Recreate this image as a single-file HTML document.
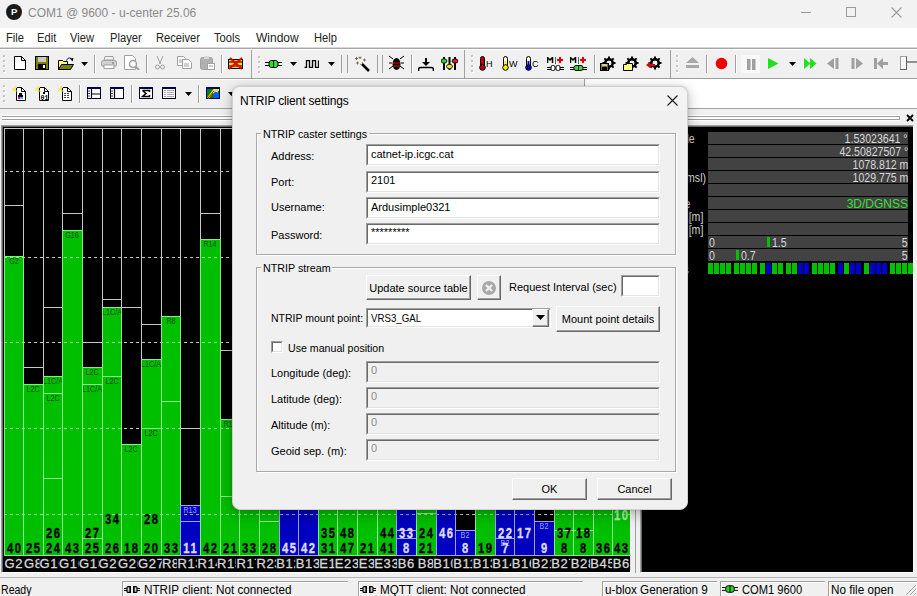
<!DOCTYPE html><html><head><meta charset="utf-8"><style>
*{margin:0;padding:0;box-sizing:border-box}
html,body{width:917px;height:596px;overflow:hidden}
body{position:relative;background:#f0f0f0;font-family:"Liberation Sans",sans-serif;font-size:12px;color:#000}
.a{position:absolute}
.t{position:absolute;white-space:nowrap;line-height:1}
.sep{position:absolute;width:2px;border-left:1px solid #a0a0a0;border-right:1px solid #fff}
.grip{position:absolute;width:3px;background:repeating-linear-gradient(#b4b4b4 0 1px,transparent 1px 4px)}
.sunk{position:absolute;background:#fff;border-top:1px solid #a0a0a0;border-left:1px solid #a0a0a0;border-right:1px solid #fff;border-bottom:1px solid #fff}
.sunk>i{position:absolute;left:0;top:0;right:0;bottom:0;border-top:1px solid #696969;border-left:1px solid #696969;border-right:1px solid #e3e3e3;border-bottom:1px solid #e3e3e3}
.btn{position:absolute;background:#f0f0f0;border-top:1px solid #fff;border-left:1px solid #fff;border-right:1px solid #696969;border-bottom:1px solid #696969}
.btn>i{position:absolute;left:0;top:0;right:0;bottom:0;border-right:1px solid #a0a0a0;border-bottom:1px solid #a0a0a0}
.dl{font-size:11px}
.col{position:absolute;top:129px;height:426px;overflow:hidden}
</style></head><body>
<div class="a" style="left:0;top:0;width:917px;height:28px;background:#f2f2f2"></div>
<div class="a" style="left:6px;top:4px;width:16px;height:16px;border-radius:50%;background:#1a1a1a"></div>
<div class="t" style="left:11px;top:7px;font-size:9.5px;font-weight:bold;color:#fff">P</div>
<div class="t" style="left:28px;top:7px;font-size:12px;color:#8a8a8a">COM1 @ 9600 - u-center 25.06</div>
<div class="a" style="left:801px;top:12px;width:10px;height:1px;background:#9a9a9a"></div>
<div class="a" style="left:846px;top:7px;width:10px;height:10px;border:1px solid #9a9a9a"></div>
<svg class="a" style="left:891px;top:7px" width="11" height="11"><path d="M0.5 0.5L10.5 10.5M10.5 0.5L0.5 10.5" stroke="#9a9a9a" stroke-width="1.1"/></svg>
<div class="a" style="left:0;top:28px;width:917px;height:20px;background:#fff;border-bottom:1px solid #d8d8d8"></div>
<div class="t" style="left:6px;top:32px;font-size:12px;color:#222;transform:scaleX(0.93);transform-origin:left top">File</div>
<div class="t" style="left:37px;top:32px;font-size:12px;color:#222;transform:scaleX(0.93);transform-origin:left top">Edit</div>
<div class="t" style="left:70px;top:32px;font-size:12px;color:#222;transform:scaleX(0.93);transform-origin:left top">View</div>
<div class="t" style="left:110px;top:32px;font-size:12px;color:#222;transform:scaleX(0.93);transform-origin:left top">Player</div>
<div class="t" style="left:156px;top:32px;font-size:12px;color:#222;transform:scaleX(0.93);transform-origin:left top">Receiver</div>
<div class="t" style="left:214px;top:32px;font-size:12px;color:#222;transform:scaleX(0.93);transform-origin:left top">Tools</div>
<div class="t" style="left:256px;top:32px;font-size:12px;color:#222;transform:scaleX(1.0);transform-origin:left top">Window</div>
<div class="t" style="left:314px;top:32px;font-size:12px;color:#222;transform:scaleX(0.93);transform-origin:left top">Help</div>
<div class="a" style="left:0;top:48px;width:917px;height:31px;background:#f0f0f0;border-top:1px solid #a8a8a8;box-shadow:inset 0 1px 0 #fff"></div>
<div class="a" style="left:0;top:78px;width:917px;height:1px;background:#a0a0a0"></div>
<div class="a" style="left:0;top:79px;width:917px;height:30px;background:#fff;border-bottom:1px solid #a0a0a0"></div>
<div class="a" style="left:0;top:79px;width:584px;height:29px;background:#f0f0f0;box-shadow:inset 0 1px 0 #fff"></div>
<div class="a" style="left:584px;top:79px;width:1px;height:29px;background:#a0a0a0"></div>
<div class="a" style="left:3px;top:55px;width:2px;height:2px;background:#c4c4c4;box-shadow:1px 1px 0 #fff"></div><div class="a" style="left:3px;top:60px;width:2px;height:2px;background:#c4c4c4;box-shadow:1px 1px 0 #fff"></div><div class="a" style="left:3px;top:65px;width:2px;height:2px;background:#c4c4c4;box-shadow:1px 1px 0 #fff"></div><div class="a" style="left:3px;top:70px;width:2px;height:2px;background:#c4c4c4;box-shadow:1px 1px 0 #fff"></div><svg class="a" style="left:14px;top:56px" width="12" height="14" viewBox="0 0 12 14"><path d="M0.5 0.5H7.5L11.5 4.5V13.5H0.5Z" fill="#fff" stroke="#000"/><path d="M7.5 0.5V4.5H11.5" fill="none" stroke="#000"/></svg><svg class="a" style="left:35px;top:56px" width="14" height="14" viewBox="0 0 14 14"><rect x="0.5" y="0.5" width="13" height="13" fill="#808000" stroke="#000"/><rect x="3" y="1" width="8" height="5" fill="#c8c8c8"/><rect x="3" y="8" width="8" height="5" fill="#000"/><rect x="8" y="9" width="2" height="3" fill="#fff"/></svg><svg class="a" style="left:58px;top:56px" width="16" height="14" viewBox="0 0 16 14"><path d="M0.5 4.5H4.5L5.5 5.5H9.5V13.5H0.5Z" fill="#ffff80" stroke="#000"/><path d="M3.5 8.5H15.5L12.5 13.5H0.5Z" fill="#808000" stroke="#000"/><path d="M8.5 4.5C9.5 2 12 1 13.5 3" fill="none" stroke="#000"/><path d="M12 2.5L15.5 2L14.5 5.5Z" fill="#000"/></svg><svg class="a" style="left:81px;top:62px" width="7" height="4" viewBox="0 0 7 4"><path d="M0 0H7L3.5 4Z" fill="#000"/></svg><div class="a" style="left:94px;top:55px;width:1px;height:18px;background:#a0a0a0;box-shadow:1px 0 0 #fff"></div><svg class="a" style="left:101px;top:56px" width="16" height="13" viewBox="0 0 16 13"><path d="M4 0.5H12L13 4H3Z" fill="#f0f0f0" stroke="#a0a0a0"/><rect x="0.5" y="4.5" width="15" height="6" rx="2" fill="#d0d0d0" stroke="#a0a0a0"/><rect x="3" y="9" width="10" height="3.5" fill="#fff" stroke="#a0a0a0"/><rect x="11" y="6" width="2" height="2" fill="#a0a0a0"/></svg><svg class="a" style="left:124px;top:55px" width="16" height="15" viewBox="0 0 16 15"><path d="M0.5 0.5H8.5L11.5 3.5V14.5H0.5Z" fill="#fff" stroke="#a0a0a0"/><circle cx="9" cy="9" r="3.5" fill="#fff" stroke="#a0a0a0" stroke-width="1.5"/><path d="M11.5 11.5L15 15" stroke="#a0a0a0" stroke-width="2"/></svg><div class="a" style="left:146px;top:55px;width:1px;height:18px;background:#a0a0a0;box-shadow:1px 0 0 #fff"></div><svg class="a" style="left:155px;top:56px" width="10" height="14" viewBox="0 0 10 14"><path d="M2 0L5.5 8M8 0L4.5 8" stroke="#a0a0a0" stroke-width="1"/><circle cx="2.5" cy="11" r="2" fill="none" stroke="#a0a0a0"/><circle cx="7.5" cy="11" r="2" fill="none" stroke="#a0a0a0"/></svg><svg class="a" style="left:177px;top:56px" width="15" height="13" viewBox="0 0 15 13"><path d="M0.5 0.5H6.5L8.5 2.5V9.5H0.5Z" fill="#fff" stroke="#a0a0a0"/><path d="M5.5 3.5H11.5L14.5 6.5V12.5H5.5Z" fill="#fff" stroke="#a0a0a0"/><path d="M2 4H6M2 6H5M7 8H12M7 10H12" stroke="#a0a0a0"/></svg><svg class="a" style="left:200px;top:56px" width="15" height="14" viewBox="0 0 15 14"><rect x="0.5" y="1.5" width="12" height="12" rx="2" fill="#b0b0b0" stroke="#a0a0a0"/><rect x="4" y="0" width="5" height="3" fill="#d8d8d8"/><rect x="7.5" y="7.5" width="7" height="6" fill="#fff" stroke="#a0a0a0"/><path d="M9 10H13" stroke="#a0a0a0"/></svg><div class="a" style="left:221px;top:55px;width:1px;height:18px;background:#a0a0a0;box-shadow:1px 0 0 #fff"></div><svg class="a" style="left:228px;top:57px" width="15" height="13" viewBox="0 0 15 13"><rect x="0.5" y="2.5" width="14" height="9" fill="#ffd800" stroke="#000"/><path d="M1 5H14M1 9H14" stroke="#6a3000" stroke-width="1.5"/><path d="M1 12L14 1M2 1L14 12" stroke="#e00000" stroke-width="2"/></svg><div class="a" style="left:251px;top:50px;width:1px;height:28px;background:#a0a0a0"></div><div class="a" style="left:258px;top:56px;width:2px;height:2px;background:#c4c4c4;box-shadow:1px 1px 0 #fff"></div><div class="a" style="left:258px;top:61px;width:2px;height:2px;background:#c4c4c4;box-shadow:1px 1px 0 #fff"></div><div class="a" style="left:258px;top:66px;width:2px;height:2px;background:#c4c4c4;box-shadow:1px 1px 0 #fff"></div><div class="a" style="left:258px;top:71px;width:2px;height:2px;background:#c4c4c4;box-shadow:1px 1px 0 #fff"></div><svg class="a" style="left:265px;top:60px" width="17" height="8" viewBox="0 0 17 8"><path d="M0 2.5H4M0 5.5H4M13 2.5H17M13 5.5H17" stroke="#000" stroke-width="1.2"/><rect x="4" y="0.5" width="9" height="7" rx="2.5" fill="#30e030" stroke="#000"/><path d="M8.5 0.5V7.5" stroke="#000"/></svg><svg class="a" style="left:290px;top:62px" width="7" height="4" viewBox="0 0 7 4"><path d="M0 0H7L3.5 4Z" fill="#000"/></svg><svg class="a" style="left:304px;top:60px" width="15" height="8" viewBox="0 0 15 8"><path d="M0.5 7.5H2.5V0.5H5.5V7.5H8.5V0.5H11.5V7.5H14.5V0.5" fill="none" stroke="#000" stroke-width="1.3"/></svg><svg class="a" style="left:328px;top:62px" width="7" height="4" viewBox="0 0 7 4"><path d="M0 0H7L3.5 4Z" fill="#000"/></svg><div class="a" style="left:341px;top:55px;width:1px;height:18px;background:#a0a0a0"></div><div class="a" style="left:347px;top:55px;width:1px;height:18px;background:#a0a0a0"></div><svg class="a" style="left:354px;top:56px" width="17" height="16" viewBox="0 0 17 16"><path d="M7 7L15 15" stroke="#000" stroke-width="2.5"/><path d="M6 6L8 8" stroke="#fff" stroke-width="2"/><path d="M1 2.5H4M2.5 1V4M6 0.5V3M4.5 1.75H7.5M9 4H12M10.5 2.5V5.5M2 7H5M3.5 5.5V8.5" stroke="#807040" stroke-width="1"/></svg><div class="a" style="left:377px;top:55px;width:1px;height:18px;background:#a0a0a0"></div><div class="a" style="left:382px;top:55px;width:1px;height:18px;background:#a0a0a0"></div><svg class="a" style="left:389px;top:55px" width="15" height="16" viewBox="0 0 15 16"><ellipse cx="7.5" cy="9" rx="4" ry="6" fill="#000"/><path d="M4 8H11M4 11H11" stroke="#a00000" stroke-width="1.5"/><path d="M0 1L4 4M15 1L11 4M0 8H3M15 8H12M0 14L4 11M15 14L11 11" stroke="#000" stroke-width="1"/></svg><div class="a" style="left:411px;top:55px;width:1px;height:18px;background:#a0a0a0;box-shadow:1px 0 0 #fff"></div><svg class="a" style="left:418px;top:58px" width="16" height="14" viewBox="0 0 16 14"><path d="M8 0V6" stroke="#000" stroke-width="2"/><path d="M4 4H12L8 8Z" fill="#000"/><path d="M0.5 13V11.5Q0.5 9.5 3 9.5H13Q15.5 9.5 15.5 11.5V13" fill="none" stroke="#000" stroke-width="1.6"/></svg><svg class="a" style="left:441px;top:56px" width="17" height="14" viewBox="0 0 17 14"><path d="M3 1V14M8.5 1V14M14 1V14" stroke="#000" stroke-width="2"/><ellipse cx="3" cy="5" rx="3" ry="2.2" fill="#30d030" stroke="#000" stroke-width="0.8"/><ellipse cx="8.5" cy="10.5" rx="3" ry="2.2" fill="#f0e020" stroke="#000" stroke-width="0.8"/><ellipse cx="14" cy="5" rx="3" ry="2.2" fill="#d02020" stroke="#000" stroke-width="0.8"/></svg><div class="a" style="left:464px;top:50px;width:1px;height:28px;background:#a0a0a0"></div><div class="a" style="left:471px;top:55px;width:2px;height:2px;background:#c4c4c4;box-shadow:1px 1px 0 #fff"></div><div class="a" style="left:471px;top:60px;width:2px;height:2px;background:#c4c4c4;box-shadow:1px 1px 0 #fff"></div><div class="a" style="left:471px;top:65px;width:2px;height:2px;background:#c4c4c4;box-shadow:1px 1px 0 #fff"></div><div class="a" style="left:471px;top:70px;width:2px;height:2px;background:#c4c4c4;box-shadow:1px 1px 0 #fff"></div><svg class="a" style="left:479px;top:56px" width="16" height="15" viewBox="0 0 16 15"><rect x="1.5" y="0.5" width="4" height="11" rx="2" fill="#c00000" stroke="#000"/><circle cx="3.5" cy="11.5" r="2.8" fill="#c00000" stroke="#000"/><text x="7" y="11" font-family="Liberation Sans" font-size="9" fill="#000">H</text></svg><svg class="a" style="left:502px;top:56px" width="16" height="15" viewBox="0 0 16 15"><rect x="1.5" y="0.5" width="4" height="11" rx="2" fill="#fff" stroke="#000"/><rect x="2.5" y="5" width="2" height="6" fill="#f0f000"/><circle cx="3.5" cy="11.5" r="2.8" fill="#f0f000" stroke="#000"/><text x="7" y="11" font-family="Liberation Sans" font-size="9" fill="#000">W</text></svg><svg class="a" style="left:525px;top:56px" width="16" height="15" viewBox="0 0 16 15"><rect x="1.5" y="0.5" width="4" height="11" rx="2" fill="#fff" stroke="#000"/><rect x="2.5" y="5" width="2" height="6" fill="#0000c0"/><circle cx="3.5" cy="11.5" r="2.8" fill="#0000c0" stroke="#000"/><text x="7" y="11" font-family="Liberation Sans" font-size="9" fill="#000">C</text></svg><svg class="a" style="left:547px;top:57px" width="17" height="14" viewBox="0 0 17 14"><path d="M0.5 6V0.5L3 3L5.5 0.5V6" fill="none" stroke="#000" stroke-width="1.5"/><path d="M8.5 0V7" stroke="#000" stroke-width="0.6"/><path d="M13 0V6M10 3H16" stroke="#e00000" stroke-width="2"/><path d="M0 10.5H4M0 12.5H4M13 10.5H17M13 12.5H17" stroke="#000" stroke-width="1"/><rect x="4" y="8.5" width="4" height="5" rx="1.5" fill="#fff" stroke="#000"/><rect x="9" y="8.5" width="4" height="5" rx="1.5" fill="#fff" stroke="#000"/></svg><svg class="a" style="left:570px;top:57px" width="17" height="14" viewBox="0 0 17 14"><path d="M0.5 6V0.5L3 3L5.5 0.5V6" fill="none" stroke="#000" stroke-width="1.5"/><path d="M8.5 0V7" stroke="#000" stroke-width="0.6"/><path d="M13 0V6M10 3H16" stroke="#e00000" stroke-width="2"/><path d="M0 10.5H4M0 12.5H4M13 10.5H17M13 12.5H17" stroke="#000" stroke-width="1"/><rect x="4" y="8.5" width="9" height="5" rx="2" fill="#30e030" stroke="#000"/><path d="M8.5 8.5V13.5" stroke="#000"/></svg><div class="a" style="left:594px;top:55px;width:1px;height:18px;background:#a0a0a0;box-shadow:1px 0 0 #fff"></div><svg class="a" style="left:600px;top:56px" width="17" height="15" viewBox="0 0 17 15"><circle cx="9" cy="7" r="5" fill="#000"/><rect x="8" y="0.5" width="2" height="13" fill="#000" transform="rotate(0 9 7)"/><rect x="8" y="0.5" width="2" height="13" fill="#000" transform="rotate(45 9 7)"/><rect x="8" y="0.5" width="2" height="13" fill="#000" transform="rotate(90 9 7)"/><rect x="8" y="0.5" width="2" height="13" fill="#000" transform="rotate(135 9 7)"/><circle cx="9" cy="7" r="3" fill="#f0f0f0" stroke="#000"/><rect x="0.5" y="7.5" width="8" height="7" fill="#808000" stroke="#000"/><rect x="2" y="8" width="5" height="2" fill="#c8c8c8"/><rect x="2" y="11" width="5" height="3" fill="#000"/></svg><svg class="a" style="left:623px;top:56px" width="17" height="15" viewBox="0 0 17 15"><circle cx="9" cy="7" r="5" fill="#000"/><rect x="8" y="0.5" width="2" height="13" fill="#000" transform="rotate(0 9 7)"/><rect x="8" y="0.5" width="2" height="13" fill="#000" transform="rotate(45 9 7)"/><rect x="8" y="0.5" width="2" height="13" fill="#000" transform="rotate(90 9 7)"/><rect x="8" y="0.5" width="2" height="13" fill="#000" transform="rotate(135 9 7)"/><circle cx="9" cy="7" r="3" fill="#f0f0f0" stroke="#000"/><path d="M0.5 8.5H3.5L4.5 7.5H9.5V14.5H0.5Z" fill="#ffff80" stroke="#000"/></svg><svg class="a" style="left:646px;top:56px" width="17" height="15" viewBox="0 0 17 15"><circle cx="9" cy="7" r="5" fill="#000"/><rect x="8" y="0.5" width="2" height="13" fill="#000" transform="rotate(0 9 7)"/><rect x="8" y="0.5" width="2" height="13" fill="#000" transform="rotate(45 9 7)"/><rect x="8" y="0.5" width="2" height="13" fill="#000" transform="rotate(90 9 7)"/><rect x="8" y="0.5" width="2" height="13" fill="#000" transform="rotate(135 9 7)"/><circle cx="9" cy="7" r="3" fill="#f0f0f0" stroke="#000"/><path d="M0 9L4 6V8H9V10H4V12Z" fill="#e00000"/></svg><div class="a" style="left:670px;top:50px;width:1px;height:28px;background:#a0a0a0"></div><div class="a" style="left:676px;top:55px;width:2px;height:2px;background:#c4c4c4;box-shadow:1px 1px 0 #fff"></div><div class="a" style="left:676px;top:60px;width:2px;height:2px;background:#c4c4c4;box-shadow:1px 1px 0 #fff"></div><div class="a" style="left:676px;top:65px;width:2px;height:2px;background:#c4c4c4;box-shadow:1px 1px 0 #fff"></div><div class="a" style="left:676px;top:70px;width:2px;height:2px;background:#c4c4c4;box-shadow:1px 1px 0 #fff"></div><svg class="a" style="left:686px;top:57px" width="13" height="12" viewBox="0 0 13 12"><path d="M6.5 0L13 6H0Z" fill="#a8a8a8"/><rect x="0" y="8" width="13" height="3" fill="#a8a8a8"/></svg><div class="a" style="left:706px;top:55px;width:1px;height:18px;background:#a0a0a0;box-shadow:1px 0 0 #fff"></div><svg class="a" style="left:715px;top:57px" width="13" height="13" viewBox="0 0 13 13"><circle cx="6.5" cy="6.5" r="5.8" fill="#f00000"/></svg><div class="a" style="left:735px;top:55px;width:1px;height:18px;background:#a0a0a0;box-shadow:1px 0 0 #fff"></div><div class="a" style="left:741px;top:55px;width:19px;height:18px;background:#f8f8f8"></div><svg class="a" style="left:746px;top:59px" width="10" height="11" viewBox="0 0 10 11"><rect x="1" y="0" width="3.5" height="11" fill="#a0a0a0"/><rect x="6" y="0" width="3.5" height="11" fill="#a0a0a0"/></svg><svg class="a" style="left:768px;top:58px" width="11" height="11" viewBox="0 0 11 11"><path d="M0 0L10.5 5.5L0 11Z" fill="#20e020"/></svg><svg class="a" style="left:789px;top:62px" width="7" height="4" viewBox="0 0 7 4"><path d="M0 0H7L3.5 4Z" fill="#000"/></svg><svg class="a" style="left:804px;top:58px" width="13" height="11" viewBox="0 0 13 11"><path d="M0 0L6.5 5.5L0 11Z" fill="#20e020"/><path d="M6 0L12.5 5.5L6 11Z" fill="#20e020"/></svg><svg class="a" style="left:827px;top:58px" width="12" height="11" viewBox="0 0 12 11"><path d="M7 0V11L0 5.5Z" fill="#a0a0a0"/><rect x="8.5" y="0" width="3" height="11" fill="#a0a0a0"/></svg><svg class="a" style="left:851px;top:58px" width="12" height="11" viewBox="0 0 12 11"><rect x="0.5" y="0" width="3" height="11" fill="#a0a0a0"/><path d="M5 0V11L12 5.5Z" fill="#a0a0a0"/></svg><svg class="a" style="left:874px;top:58px" width="14" height="11" viewBox="0 0 14 11"><rect x="0" y="0" width="3" height="11" fill="#a0a0a0"/><path d="M3 5.5L9 0V11Z" fill="#a0a0a0"/><rect x="8" y="4" width="6" height="3" fill="#a0a0a0"/></svg><svg class="a" style="left:899px;top:56px" width="18" height="15" viewBox="0 0 18 15"><rect x="1.5" y="0.5" width="6" height="13" fill="#f8f8f8" stroke="#a0a0a0"/><path d="M7.5 0.5V13.5H1" stroke="#606060" fill="none"/><rect x="8" y="5" width="10" height="2" fill="#909090"/></svg><div class="a" style="left:3px;top:85px;width:2px;height:2px;background:#c4c4c4;box-shadow:1px 1px 0 #fff"></div><div class="a" style="left:3px;top:90px;width:2px;height:2px;background:#c4c4c4;box-shadow:1px 1px 0 #fff"></div><div class="a" style="left:3px;top:95px;width:2px;height:2px;background:#c4c4c4;box-shadow:1px 1px 0 #fff"></div><div class="a" style="left:3px;top:100px;width:2px;height:2px;background:#c4c4c4;box-shadow:1px 1px 0 #fff"></div><svg class="a" style="left:12px;top:86px" width="16" height="15" viewBox="0 0 16 15"><path d="M4.5 1.5H9.5L13.5 5.5V14.5H4.5Z" fill="#fff" stroke="#000"/><path d="M9.5 1.5V5.5H13.5" fill="none" stroke="#000"/><path d="M0 2L6 6M3 0V6M0 5L5 1" stroke="#e8e840" stroke-width="1"/><rect x="7" y="7" width="3" height="2" fill="#000"/><rect x="6" y="9" width="5" height="2" fill="#000"/><rect x="6" y="11" width="2.5" height="2" fill="#e000e0"/><rect x="8.5" y="11" width="2.5" height="2" fill="#30c0f0"/></svg><svg class="a" style="left:35px;top:86px" width="16" height="15" viewBox="0 0 16 15"><path d="M4.5 1.5H9.5L13.5 5.5V14.5H4.5Z" fill="#fff" stroke="#000"/><path d="M9.5 1.5V5.5H13.5" fill="none" stroke="#000"/><path d="M0 2L6 6M3 0V6M0 5L5 1" stroke="#e8e840" stroke-width="1"/><text x="5.5" y="13.5" font-family="Liberation Mono" font-weight="bold" font-size="6.5" fill="#000">01</text><rect x="8" y="6" width="2" height="2" fill="#000"/></svg><svg class="a" style="left:58px;top:86px" width="16" height="15" viewBox="0 0 16 15"><path d="M4.5 1.5H9.5L13.5 5.5V14.5H4.5Z" fill="#fff" stroke="#000"/><path d="M9.5 1.5V5.5H13.5" fill="none" stroke="#000"/><path d="M0 2L6 6M3 0V6M0 5L5 1" stroke="#e8e840" stroke-width="1"/><path d="M6 7.5H12M6 9.5H12M6 11.5H12" stroke="#404040" stroke-dasharray="2 1"/></svg><div class="a" style="left:79px;top:85px;width:1px;height:18px;background:#a0a0a0;box-shadow:1px 0 0 #fff"></div><svg class="a" style="left:87px;top:87px" width="14" height="12" viewBox="0 0 14 12"><rect x="0.5" y="0.5" width="13" height="11" fill="#fff" stroke="#000020"/><rect x="0" y="0" width="14" height="2" fill="#000050"/><path d="M4.5 2V11.5M4.5 7H14" stroke="#000020" stroke-width="1.2"/><path d="M2 3.5V4.5M2 6V7M2 8.5V9.5" stroke="#000" stroke-width="1.5"/></svg><svg class="a" style="left:110px;top:87px" width="14" height="12" viewBox="0 0 14 12"><rect x="0.5" y="0.5" width="13" height="11" fill="#fff" stroke="#000020"/><rect x="0" y="0" width="14" height="2" fill="#000050"/><path d="M4.5 2V11.5" stroke="#000020" stroke-width="1.2"/><path d="M2 3.5V4.5M2 6V7M2 8.5V9.5" stroke="#000" stroke-width="1.5"/></svg><div class="a" style="left:131px;top:85px;width:1px;height:18px;background:#a0a0a0;box-shadow:1px 0 0 #fff"></div><svg class="a" style="left:139px;top:87px" width="14" height="12" viewBox="0 0 14 12"><rect x="0.5" y="0.5" width="13" height="11" fill="#fff" stroke="#000020"/><rect x="0" y="0" width="14" height="2" fill="#000050"/><path d="M3.5 3.5H10.5V5M3.5 3.5L7 6.5L3.5 9.5H10.5V8" fill="none" stroke="#000" stroke-width="1.5"/></svg><svg class="a" style="left:162px;top:87px" width="14" height="12" viewBox="0 0 14 12"><rect x="0.5" y="0.5" width="13" height="11" fill="#fff" stroke="#000020"/><rect x="0" y="0" width="14" height="2" fill="#000050"/><path d="M2 3.5H12M2 5.5H12M2 7.5H12M2 9.5H12" stroke="#a8a8a8" stroke-dasharray="2 1 7 0"/></svg><svg class="a" style="left:185px;top:92px" width="7" height="4" viewBox="0 0 7 4"><path d="M0 0H7L3.5 4Z" fill="#000"/></svg><div class="a" style="left:198px;top:85px;width:1px;height:18px;background:#a0a0a0;box-shadow:1px 0 0 #fff"></div><svg class="a" style="left:206px;top:87px" width="14" height="12" viewBox="0 0 14 12"><rect x="0.5" y="0.5" width="13" height="11" fill="#008000" stroke="#000080"/><rect x="0" y="0" width="14" height="2" fill="#000080"/><path d="M2 11L8 3L13 3" stroke="#f0f000" stroke-width="2" fill="none"/><path d="M2 11L8 4" stroke="#e00000" stroke-width="1"/><circle cx="10" cy="8" r="3" fill="#0060ff"/><path d="M7 6Q9 3 12 5" stroke="#fff" fill="none"/></svg><svg class="a" style="left:228px;top:92px" width="7" height="4" viewBox="0 0 7 4"><path d="M0 0H7L3.5 4Z" fill="#000"/></svg>
<div class="a" style="left:2px;top:115px;width:898px;height:6px;background:#fff"></div>
<div class="a" style="left:2px;top:116px;width:898px;height:1px;background:#a0a0a0"></div>
<div class="a" style="left:2px;top:119px;width:898px;height:1px;background:#a0a0a0"></div>
<div class="a" style="left:899px;top:116px;width:1px;height:4px;background:#a0a0a0"></div>
<svg class="a" style="left:906px;top:114px" width="8" height="8"><path d="M1 1L7 7M7 1L1 7" stroke="#000" stroke-width="1.8"/></svg>
<div class="a" style="left:1px;top:125px;width:630px;height:448px;background:#000;border-top:1px solid #a0a0a0;border-left:1px solid #a0a0a0;border-right:1px solid #fff;border-bottom:1px solid #fff;box-shadow:inset 1px 1px 0 #696969"></div>
<div class="a" style="left:640px;top:125px;width:274px;height:448px;background:#000;border-top:1px solid #a0a0a0;border-left:1px solid #a0a0a0;border-right:1px solid #fff;border-bottom:1px solid #fff;box-shadow:inset 1px 1px 0 #696969"></div>
<div class="a" style="left:635px;top:125px;width:1px;height:448px;background:#a0a0a0"></div>
<div class="a" style="left:4px;top:256px;width:19px;height:299px;background:#00be00"></div>
<div class="a" style="left:23px;top:384px;width:20px;height:171px;background:#00be00"></div>
<div class="a" style="left:43px;top:376px;width:19px;height:179px;background:#00be00"></div>
<div class="a" style="left:62px;top:230px;width:20px;height:325px;background:#00be00"></div>
<div class="a" style="left:82px;top:367px;width:20px;height:188px;background:#00be00"></div>
<div class="a" style="left:102px;top:307px;width:19px;height:248px;background:#00be00"></div>
<div class="a" style="left:121px;top:444px;width:20px;height:111px;background:#00be00"></div>
<div class="a" style="left:141px;top:359px;width:20px;height:196px;background:#00be00"></div>
<div class="a" style="left:161px;top:316px;width:19px;height:239px;background:#00be00"></div>
<div class="a" style="left:180px;top:505px;width:20px;height:50px;background:#0000c0"></div>
<div class="a" style="left:200px;top:239px;width:20px;height:316px;background:#00be00"></div>
<div class="a" style="left:220px;top:419px;width:19px;height:136px;background:#00be00"></div>
<div class="a" style="left:239px;top:300px;width:20px;height:255px;background:#00be00"></div>
<div class="a" style="left:259px;top:300px;width:20px;height:255px;background:#00be00"></div>
<div class="a" style="left:279px;top:300px;width:19px;height:255px;background:#0000c0"></div>
<div class="a" style="left:298px;top:300px;width:20px;height:255px;background:#0000c0"></div>
<div class="a" style="left:318px;top:300px;width:19px;height:255px;background:#00be00"></div>
<div class="a" style="left:337px;top:300px;width:20px;height:255px;background:#00be00"></div>
<div class="a" style="left:357px;top:300px;width:20px;height:255px;background:#00be00"></div>
<div class="a" style="left:377px;top:300px;width:19px;height:255px;background:#00be00"></div>
<div class="a" style="left:396px;top:300px;width:20px;height:255px;background:#0000c0"></div>
<div class="a" style="left:416px;top:300px;width:20px;height:255px;background:#00be00"></div>
<div class="a" style="left:436px;top:300px;width:19px;height:255px;background:#0000c0"></div>
<div class="a" style="left:455px;top:530px;width:20px;height:25px;background:#0000c0"></div>
<div class="a" style="left:475px;top:300px;width:20px;height:255px;background:#00be00"></div>
<div class="a" style="left:495px;top:300px;width:19px;height:255px;background:#0000c0"></div>
<div class="a" style="left:514px;top:300px;width:20px;height:255px;background:#0000c0"></div>
<div class="a" style="left:534px;top:521px;width:20px;height:34px;background:#0000c0"></div>
<div class="a" style="left:554px;top:300px;width:19px;height:255px;background:#00be00"></div>
<div class="a" style="left:573px;top:300px;width:20px;height:255px;background:#00be00"></div>
<div class="a" style="left:593px;top:300px;width:19px;height:255px;background:#00be00"></div>
<div class="a" style="left:612px;top:300px;width:18px;height:255px;background:#00be00"></div>
<div class="a" style="left:4px;top:129px;width:1px;height:426px;background:#c8c8c8"></div>
<div class="a" style="left:23px;top:129px;width:1px;height:426px;background:#c8c8c8"></div>
<div class="a" style="left:43px;top:129px;width:1px;height:426px;background:#c8c8c8"></div>
<div class="a" style="left:62px;top:129px;width:1px;height:426px;background:#c8c8c8"></div>
<div class="a" style="left:82px;top:129px;width:1px;height:426px;background:#c8c8c8"></div>
<div class="a" style="left:102px;top:129px;width:1px;height:426px;background:#c8c8c8"></div>
<div class="a" style="left:121px;top:129px;width:1px;height:426px;background:#c8c8c8"></div>
<div class="a" style="left:141px;top:129px;width:1px;height:426px;background:#c8c8c8"></div>
<div class="a" style="left:161px;top:129px;width:1px;height:426px;background:#c8c8c8"></div>
<div class="a" style="left:180px;top:129px;width:1px;height:426px;background:#c8c8c8"></div>
<div class="a" style="left:200px;top:129px;width:1px;height:426px;background:#c8c8c8"></div>
<div class="a" style="left:220px;top:129px;width:1px;height:426px;background:#c8c8c8"></div>
<div class="a" style="left:239px;top:129px;width:1px;height:426px;background:#c8c8c8"></div>
<div class="a" style="left:259px;top:129px;width:1px;height:426px;background:#c8c8c8"></div>
<div class="a" style="left:279px;top:129px;width:1px;height:426px;background:#c8c8c8"></div>
<div class="a" style="left:298px;top:129px;width:1px;height:426px;background:#c8c8c8"></div>
<div class="a" style="left:318px;top:129px;width:1px;height:426px;background:#c8c8c8"></div>
<div class="a" style="left:337px;top:129px;width:1px;height:426px;background:#c8c8c8"></div>
<div class="a" style="left:357px;top:129px;width:1px;height:426px;background:#c8c8c8"></div>
<div class="a" style="left:377px;top:129px;width:1px;height:426px;background:#c8c8c8"></div>
<div class="a" style="left:396px;top:129px;width:1px;height:426px;background:#c8c8c8"></div>
<div class="a" style="left:416px;top:129px;width:1px;height:426px;background:#c8c8c8"></div>
<div class="a" style="left:436px;top:129px;width:1px;height:426px;background:#c8c8c8"></div>
<div class="a" style="left:455px;top:129px;width:1px;height:426px;background:#c8c8c8"></div>
<div class="a" style="left:475px;top:129px;width:1px;height:426px;background:#c8c8c8"></div>
<div class="a" style="left:495px;top:129px;width:1px;height:426px;background:#c8c8c8"></div>
<div class="a" style="left:514px;top:129px;width:1px;height:426px;background:#c8c8c8"></div>
<div class="a" style="left:534px;top:129px;width:1px;height:426px;background:#c8c8c8"></div>
<div class="a" style="left:554px;top:129px;width:1px;height:426px;background:#c8c8c8"></div>
<div class="a" style="left:573px;top:129px;width:1px;height:426px;background:#c8c8c8"></div>
<div class="a" style="left:593px;top:129px;width:1px;height:426px;background:#c8c8c8"></div>
<div class="a" style="left:612px;top:129px;width:1px;height:426px;background:#c8c8c8"></div>
<div class="a" style="left:4px;top:128px;width:626px;height:1px;background:#c8c8c8"></div>
<div class="a" style="left:4px;top:555px;width:626px;height:1px;background:#c8c8c8"></div>
<div class="a" style="left:4px;top:171px;width:626px;height:1px;background:repeating-linear-gradient(90deg,#c8c8c8 0 3px,transparent 3px 6px)"></div>
<div class="a" style="left:4px;top:257px;width:626px;height:1px;background:repeating-linear-gradient(90deg,#c8c8c8 0 3px,transparent 3px 6px)"></div>
<div class="a" style="left:4px;top:342px;width:626px;height:1px;background:repeating-linear-gradient(90deg,#c8c8c8 0 3px,transparent 3px 6px)"></div>
<div class="a" style="left:4px;top:428px;width:626px;height:1px;background:repeating-linear-gradient(90deg,#c8c8c8 0 3px,transparent 3px 6px)"></div>
<div class="a" style="left:4px;top:514px;width:626px;height:1px;background:repeating-linear-gradient(90deg,#c8c8c8 0 3px,transparent 3px 6px)"></div>
<div class="a" style="left:4px;top:205px;width:20px;height:1px;background:#c8c8c8"></div>
<div class="a" style="left:4px;top:256px;width:20px;height:1px;background:#8ae88a"></div>
<div class="a" style="left:4px;top:256px;width:1px;height:300px;background:#8ae88a"></div>
<div class="a" style="left:23px;top:256px;width:1px;height:300px;background:#8ae88a"></div>
<div class="a" style="left:4px;top:555px;width:20px;height:1px;background:#8ae88a"></div>
<div class="a" style="left:5px;top:257px;width:18px;height:1px;background:repeating-linear-gradient(90deg,#8ae88a -1px 2px,transparent 2px 5px)"></div>
<div class="a" style="left:5px;top:342px;width:18px;height:1px;background:repeating-linear-gradient(90deg,#8ae88a -1px 2px,transparent 2px 5px)"></div>
<div class="a" style="left:5px;top:428px;width:18px;height:1px;background:repeating-linear-gradient(90deg,#8ae88a -1px 2px,transparent 2px 5px)"></div>
<div class="a" style="left:5px;top:514px;width:18px;height:1px;background:repeating-linear-gradient(90deg,#8ae88a -1px 2px,transparent 2px 5px)"></div>
<div class="a" style="left:23px;top:367px;width:21px;height:1px;background:#c8c8c8"></div>
<div class="a" style="left:23px;top:384px;width:21px;height:1px;background:#8ae88a"></div>
<div class="a" style="left:23px;top:384px;width:1px;height:172px;background:#8ae88a"></div>
<div class="a" style="left:43px;top:384px;width:1px;height:172px;background:#8ae88a"></div>
<div class="a" style="left:23px;top:555px;width:21px;height:1px;background:#8ae88a"></div>
<div class="a" style="left:24px;top:428px;width:19px;height:1px;background:repeating-linear-gradient(90deg,#8ae88a -2px 1px,transparent 1px 4px)"></div>
<div class="a" style="left:24px;top:514px;width:19px;height:1px;background:repeating-linear-gradient(90deg,#8ae88a -2px 1px,transparent 1px 4px)"></div>
<div class="a" style="left:43px;top:307px;width:20px;height:1px;background:#c8c8c8"></div>
<div class="a" style="left:43px;top:393px;width:20px;height:1px;background:#8ae88a"></div>
<div class="a" style="left:43px;top:478px;width:20px;height:1px;background:#8ae88a"></div>
<div class="a" style="left:43px;top:376px;width:20px;height:1px;background:#8ae88a"></div>
<div class="a" style="left:43px;top:376px;width:1px;height:180px;background:#8ae88a"></div>
<div class="a" style="left:62px;top:376px;width:1px;height:180px;background:#8ae88a"></div>
<div class="a" style="left:43px;top:555px;width:20px;height:1px;background:#8ae88a"></div>
<div class="a" style="left:44px;top:428px;width:18px;height:1px;background:repeating-linear-gradient(90deg,#8ae88a -4px -1px,transparent -1px 2px)"></div>
<div class="a" style="left:44px;top:514px;width:18px;height:1px;background:repeating-linear-gradient(90deg,#8ae88a -4px -1px,transparent -1px 2px)"></div>
<div class="a" style="left:62px;top:213px;width:21px;height:1px;background:#c8c8c8"></div>
<div class="a" style="left:62px;top:230px;width:21px;height:1px;background:#8ae88a"></div>
<div class="a" style="left:62px;top:230px;width:1px;height:326px;background:#8ae88a"></div>
<div class="a" style="left:82px;top:230px;width:1px;height:326px;background:#8ae88a"></div>
<div class="a" style="left:62px;top:555px;width:21px;height:1px;background:#8ae88a"></div>
<div class="a" style="left:63px;top:257px;width:19px;height:1px;background:repeating-linear-gradient(90deg,#8ae88a -5px -2px,transparent -2px 1px)"></div>
<div class="a" style="left:63px;top:342px;width:19px;height:1px;background:repeating-linear-gradient(90deg,#8ae88a -5px -2px,transparent -2px 1px)"></div>
<div class="a" style="left:63px;top:428px;width:19px;height:1px;background:repeating-linear-gradient(90deg,#8ae88a -5px -2px,transparent -2px 1px)"></div>
<div class="a" style="left:63px;top:514px;width:19px;height:1px;background:repeating-linear-gradient(90deg,#8ae88a -5px -2px,transparent -2px 1px)"></div>
<div class="a" style="left:82px;top:342px;width:21px;height:1px;background:#c8c8c8"></div>
<div class="a" style="left:82px;top:384px;width:21px;height:1px;background:#8ae88a"></div>
<div class="a" style="left:82px;top:538px;width:21px;height:1px;background:#8ae88a"></div>
<div class="a" style="left:82px;top:367px;width:21px;height:1px;background:#8ae88a"></div>
<div class="a" style="left:82px;top:367px;width:1px;height:189px;background:#8ae88a"></div>
<div class="a" style="left:102px;top:367px;width:1px;height:189px;background:#8ae88a"></div>
<div class="a" style="left:82px;top:555px;width:21px;height:1px;background:#8ae88a"></div>
<div class="a" style="left:83px;top:428px;width:19px;height:1px;background:repeating-linear-gradient(90deg,#8ae88a -1px 2px,transparent 2px 5px)"></div>
<div class="a" style="left:83px;top:514px;width:19px;height:1px;background:repeating-linear-gradient(90deg,#8ae88a -1px 2px,transparent 2px 5px)"></div>
<div class="a" style="left:102px;top:299px;width:20px;height:1px;background:#c8c8c8"></div>
<div class="a" style="left:102px;top:376px;width:20px;height:1px;background:#8ae88a"></div>
<div class="a" style="left:102px;top:307px;width:20px;height:1px;background:#8ae88a"></div>
<div class="a" style="left:102px;top:307px;width:1px;height:249px;background:#8ae88a"></div>
<div class="a" style="left:121px;top:307px;width:1px;height:249px;background:#8ae88a"></div>
<div class="a" style="left:102px;top:555px;width:20px;height:1px;background:#8ae88a"></div>
<div class="a" style="left:103px;top:342px;width:18px;height:1px;background:repeating-linear-gradient(90deg,#8ae88a -3px 0px,transparent 0px 3px)"></div>
<div class="a" style="left:103px;top:428px;width:18px;height:1px;background:repeating-linear-gradient(90deg,#8ae88a -3px 0px,transparent 0px 3px)"></div>
<div class="a" style="left:103px;top:514px;width:18px;height:1px;background:repeating-linear-gradient(90deg,#8ae88a -3px 0px,transparent 0px 3px)"></div>
<div class="a" style="left:121px;top:307px;width:21px;height:1px;background:#c8c8c8"></div>
<div class="a" style="left:121px;top:444px;width:21px;height:1px;background:#8ae88a"></div>
<div class="a" style="left:121px;top:444px;width:1px;height:112px;background:#8ae88a"></div>
<div class="a" style="left:141px;top:444px;width:1px;height:112px;background:#8ae88a"></div>
<div class="a" style="left:121px;top:555px;width:21px;height:1px;background:#8ae88a"></div>
<div class="a" style="left:122px;top:514px;width:19px;height:1px;background:repeating-linear-gradient(90deg,#8ae88a -4px -1px,transparent -1px 2px)"></div>
<div class="a" style="left:141px;top:324px;width:21px;height:1px;background:#c8c8c8"></div>
<div class="a" style="left:141px;top:428px;width:21px;height:1px;background:#8ae88a"></div>
<div class="a" style="left:141px;top:359px;width:21px;height:1px;background:#8ae88a"></div>
<div class="a" style="left:141px;top:359px;width:1px;height:197px;background:#8ae88a"></div>
<div class="a" style="left:161px;top:359px;width:1px;height:197px;background:#8ae88a"></div>
<div class="a" style="left:141px;top:555px;width:21px;height:1px;background:#8ae88a"></div>
<div class="a" style="left:142px;top:428px;width:19px;height:1px;background:repeating-linear-gradient(90deg,#8ae88a 0px 3px,transparent 3px 6px)"></div>
<div class="a" style="left:142px;top:514px;width:19px;height:1px;background:repeating-linear-gradient(90deg,#8ae88a 0px 3px,transparent 3px 6px)"></div>
<div class="a" style="left:161px;top:401px;width:20px;height:1px;background:#8ae88a"></div>
<div class="a" style="left:161px;top:316px;width:20px;height:1px;background:#8ae88a"></div>
<div class="a" style="left:161px;top:316px;width:1px;height:240px;background:#8ae88a"></div>
<div class="a" style="left:180px;top:316px;width:1px;height:240px;background:#8ae88a"></div>
<div class="a" style="left:161px;top:555px;width:20px;height:1px;background:#8ae88a"></div>
<div class="a" style="left:162px;top:342px;width:18px;height:1px;background:repeating-linear-gradient(90deg,#8ae88a -2px 1px,transparent 1px 4px)"></div>
<div class="a" style="left:162px;top:428px;width:18px;height:1px;background:repeating-linear-gradient(90deg,#8ae88a -2px 1px,transparent 1px 4px)"></div>
<div class="a" style="left:162px;top:514px;width:18px;height:1px;background:repeating-linear-gradient(90deg,#8ae88a -2px 1px,transparent 1px 4px)"></div>
<div class="a" style="left:180px;top:428px;width:21px;height:1px;background:#c8c8c8"></div>
<div class="a" style="left:180px;top:521px;width:21px;height:1px;background:#a0a0f4"></div>
<div class="a" style="left:180px;top:505px;width:21px;height:1px;background:#a0a0f4"></div>
<div class="a" style="left:180px;top:505px;width:1px;height:51px;background:#a0a0f4"></div>
<div class="a" style="left:200px;top:505px;width:1px;height:51px;background:#a0a0f4"></div>
<div class="a" style="left:180px;top:555px;width:21px;height:1px;background:#a0a0f4"></div>
<div class="a" style="left:181px;top:514px;width:19px;height:1px;background:repeating-linear-gradient(90deg,#a0a0f4 -3px 0px,transparent 0px 3px)"></div>
<div class="a" style="left:200px;top:213px;width:21px;height:1px;background:#c8c8c8"></div>
<div class="a" style="left:200px;top:239px;width:21px;height:1px;background:#8ae88a"></div>
<div class="a" style="left:200px;top:239px;width:1px;height:317px;background:#8ae88a"></div>
<div class="a" style="left:220px;top:239px;width:1px;height:317px;background:#8ae88a"></div>
<div class="a" style="left:200px;top:555px;width:21px;height:1px;background:#8ae88a"></div>
<div class="a" style="left:201px;top:257px;width:19px;height:1px;background:repeating-linear-gradient(90deg,#8ae88a -5px -2px,transparent -2px 1px)"></div>
<div class="a" style="left:201px;top:342px;width:19px;height:1px;background:repeating-linear-gradient(90deg,#8ae88a -5px -2px,transparent -2px 1px)"></div>
<div class="a" style="left:201px;top:428px;width:19px;height:1px;background:repeating-linear-gradient(90deg,#8ae88a -5px -2px,transparent -2px 1px)"></div>
<div class="a" style="left:201px;top:514px;width:19px;height:1px;background:repeating-linear-gradient(90deg,#8ae88a -5px -2px,transparent -2px 1px)"></div>
<div class="a" style="left:220px;top:350px;width:20px;height:1px;background:#c8c8c8"></div>
<div class="a" style="left:220px;top:496px;width:20px;height:1px;background:#8ae88a"></div>
<div class="a" style="left:220px;top:419px;width:20px;height:1px;background:#8ae88a"></div>
<div class="a" style="left:220px;top:419px;width:1px;height:137px;background:#8ae88a"></div>
<div class="a" style="left:239px;top:419px;width:1px;height:137px;background:#8ae88a"></div>
<div class="a" style="left:220px;top:555px;width:20px;height:1px;background:#8ae88a"></div>
<div class="a" style="left:221px;top:428px;width:18px;height:1px;background:repeating-linear-gradient(90deg,#8ae88a -1px 2px,transparent 2px 5px)"></div>
<div class="a" style="left:221px;top:514px;width:18px;height:1px;background:repeating-linear-gradient(90deg,#8ae88a -1px 2px,transparent 2px 5px)"></div>
<div class="a" style="left:239px;top:300px;width:21px;height:1px;background:#8ae88a"></div>
<div class="a" style="left:239px;top:300px;width:1px;height:256px;background:#8ae88a"></div>
<div class="a" style="left:259px;top:300px;width:1px;height:256px;background:#8ae88a"></div>
<div class="a" style="left:239px;top:555px;width:21px;height:1px;background:#8ae88a"></div>
<div class="a" style="left:240px;top:342px;width:19px;height:1px;background:repeating-linear-gradient(90deg,#8ae88a -2px 1px,transparent 1px 4px)"></div>
<div class="a" style="left:240px;top:428px;width:19px;height:1px;background:repeating-linear-gradient(90deg,#8ae88a -2px 1px,transparent 1px 4px)"></div>
<div class="a" style="left:240px;top:514px;width:19px;height:1px;background:repeating-linear-gradient(90deg,#8ae88a -2px 1px,transparent 1px 4px)"></div>
<div class="a" style="left:259px;top:521px;width:21px;height:1px;background:#8ae88a"></div>
<div class="a" style="left:259px;top:300px;width:21px;height:1px;background:#8ae88a"></div>
<div class="a" style="left:259px;top:300px;width:1px;height:256px;background:#8ae88a"></div>
<div class="a" style="left:279px;top:300px;width:1px;height:256px;background:#8ae88a"></div>
<div class="a" style="left:259px;top:555px;width:21px;height:1px;background:#8ae88a"></div>
<div class="a" style="left:260px;top:342px;width:19px;height:1px;background:repeating-linear-gradient(90deg,#8ae88a -4px -1px,transparent -1px 2px)"></div>
<div class="a" style="left:260px;top:428px;width:19px;height:1px;background:repeating-linear-gradient(90deg,#8ae88a -4px -1px,transparent -1px 2px)"></div>
<div class="a" style="left:260px;top:514px;width:19px;height:1px;background:repeating-linear-gradient(90deg,#8ae88a -4px -1px,transparent -1px 2px)"></div>
<div class="a" style="left:279px;top:300px;width:20px;height:1px;background:#a0a0f4"></div>
<div class="a" style="left:279px;top:300px;width:1px;height:256px;background:#a0a0f4"></div>
<div class="a" style="left:298px;top:300px;width:1px;height:256px;background:#a0a0f4"></div>
<div class="a" style="left:279px;top:555px;width:20px;height:1px;background:#a0a0f4"></div>
<div class="a" style="left:280px;top:342px;width:18px;height:1px;background:repeating-linear-gradient(90deg,#a0a0f4 0px 3px,transparent 3px 6px)"></div>
<div class="a" style="left:280px;top:428px;width:18px;height:1px;background:repeating-linear-gradient(90deg,#a0a0f4 0px 3px,transparent 3px 6px)"></div>
<div class="a" style="left:280px;top:514px;width:18px;height:1px;background:repeating-linear-gradient(90deg,#a0a0f4 0px 3px,transparent 3px 6px)"></div>
<div class="a" style="left:298px;top:300px;width:21px;height:1px;background:#a0a0f4"></div>
<div class="a" style="left:298px;top:300px;width:1px;height:256px;background:#a0a0f4"></div>
<div class="a" style="left:318px;top:300px;width:1px;height:256px;background:#a0a0f4"></div>
<div class="a" style="left:298px;top:555px;width:21px;height:1px;background:#a0a0f4"></div>
<div class="a" style="left:299px;top:342px;width:19px;height:1px;background:repeating-linear-gradient(90deg,#a0a0f4 -1px 2px,transparent 2px 5px)"></div>
<div class="a" style="left:299px;top:428px;width:19px;height:1px;background:repeating-linear-gradient(90deg,#a0a0f4 -1px 2px,transparent 2px 5px)"></div>
<div class="a" style="left:299px;top:514px;width:19px;height:1px;background:repeating-linear-gradient(90deg,#a0a0f4 -1px 2px,transparent 2px 5px)"></div>
<div class="a" style="left:318px;top:300px;width:20px;height:1px;background:#8ae88a"></div>
<div class="a" style="left:318px;top:300px;width:1px;height:256px;background:#8ae88a"></div>
<div class="a" style="left:337px;top:300px;width:1px;height:256px;background:#8ae88a"></div>
<div class="a" style="left:318px;top:555px;width:20px;height:1px;background:#8ae88a"></div>
<div class="a" style="left:319px;top:342px;width:18px;height:1px;background:repeating-linear-gradient(90deg,#8ae88a -3px 0px,transparent 0px 3px)"></div>
<div class="a" style="left:319px;top:428px;width:18px;height:1px;background:repeating-linear-gradient(90deg,#8ae88a -3px 0px,transparent 0px 3px)"></div>
<div class="a" style="left:319px;top:514px;width:18px;height:1px;background:repeating-linear-gradient(90deg,#8ae88a -3px 0px,transparent 0px 3px)"></div>
<div class="a" style="left:337px;top:300px;width:21px;height:1px;background:#8ae88a"></div>
<div class="a" style="left:337px;top:300px;width:1px;height:256px;background:#8ae88a"></div>
<div class="a" style="left:357px;top:300px;width:1px;height:256px;background:#8ae88a"></div>
<div class="a" style="left:337px;top:555px;width:21px;height:1px;background:#8ae88a"></div>
<div class="a" style="left:338px;top:342px;width:19px;height:1px;background:repeating-linear-gradient(90deg,#8ae88a -4px -1px,transparent -1px 2px)"></div>
<div class="a" style="left:338px;top:428px;width:19px;height:1px;background:repeating-linear-gradient(90deg,#8ae88a -4px -1px,transparent -1px 2px)"></div>
<div class="a" style="left:338px;top:514px;width:19px;height:1px;background:repeating-linear-gradient(90deg,#8ae88a -4px -1px,transparent -1px 2px)"></div>
<div class="a" style="left:357px;top:300px;width:21px;height:1px;background:#8ae88a"></div>
<div class="a" style="left:357px;top:300px;width:1px;height:256px;background:#8ae88a"></div>
<div class="a" style="left:377px;top:300px;width:1px;height:256px;background:#8ae88a"></div>
<div class="a" style="left:357px;top:555px;width:21px;height:1px;background:#8ae88a"></div>
<div class="a" style="left:358px;top:342px;width:19px;height:1px;background:repeating-linear-gradient(90deg,#8ae88a 0px 3px,transparent 3px 6px)"></div>
<div class="a" style="left:358px;top:428px;width:19px;height:1px;background:repeating-linear-gradient(90deg,#8ae88a 0px 3px,transparent 3px 6px)"></div>
<div class="a" style="left:358px;top:514px;width:19px;height:1px;background:repeating-linear-gradient(90deg,#8ae88a 0px 3px,transparent 3px 6px)"></div>
<div class="a" style="left:377px;top:300px;width:20px;height:1px;background:#8ae88a"></div>
<div class="a" style="left:377px;top:300px;width:1px;height:256px;background:#8ae88a"></div>
<div class="a" style="left:396px;top:300px;width:1px;height:256px;background:#8ae88a"></div>
<div class="a" style="left:377px;top:555px;width:20px;height:1px;background:#8ae88a"></div>
<div class="a" style="left:378px;top:342px;width:18px;height:1px;background:repeating-linear-gradient(90deg,#8ae88a -2px 1px,transparent 1px 4px)"></div>
<div class="a" style="left:378px;top:428px;width:18px;height:1px;background:repeating-linear-gradient(90deg,#8ae88a -2px 1px,transparent 1px 4px)"></div>
<div class="a" style="left:378px;top:514px;width:18px;height:1px;background:repeating-linear-gradient(90deg,#8ae88a -2px 1px,transparent 1px 4px)"></div>
<div class="a" style="left:396px;top:530px;width:21px;height:1px;background:#a0a0f4"></div>
<div class="a" style="left:396px;top:538px;width:21px;height:1px;background:#a0a0f4"></div>
<div class="a" style="left:396px;top:300px;width:21px;height:1px;background:#a0a0f4"></div>
<div class="a" style="left:396px;top:300px;width:1px;height:256px;background:#a0a0f4"></div>
<div class="a" style="left:416px;top:300px;width:1px;height:256px;background:#a0a0f4"></div>
<div class="a" style="left:396px;top:555px;width:21px;height:1px;background:#a0a0f4"></div>
<div class="a" style="left:397px;top:342px;width:19px;height:1px;background:repeating-linear-gradient(90deg,#a0a0f4 -3px 0px,transparent 0px 3px)"></div>
<div class="a" style="left:397px;top:428px;width:19px;height:1px;background:repeating-linear-gradient(90deg,#a0a0f4 -3px 0px,transparent 0px 3px)"></div>
<div class="a" style="left:397px;top:514px;width:19px;height:1px;background:repeating-linear-gradient(90deg,#a0a0f4 -3px 0px,transparent 0px 3px)"></div>
<div class="a" style="left:416px;top:513px;width:21px;height:1px;background:#8ae88a"></div>
<div class="a" style="left:416px;top:300px;width:21px;height:1px;background:#8ae88a"></div>
<div class="a" style="left:416px;top:300px;width:1px;height:256px;background:#8ae88a"></div>
<div class="a" style="left:436px;top:300px;width:1px;height:256px;background:#8ae88a"></div>
<div class="a" style="left:416px;top:555px;width:21px;height:1px;background:#8ae88a"></div>
<div class="a" style="left:417px;top:342px;width:19px;height:1px;background:repeating-linear-gradient(90deg,#8ae88a -5px -2px,transparent -2px 1px)"></div>
<div class="a" style="left:417px;top:428px;width:19px;height:1px;background:repeating-linear-gradient(90deg,#8ae88a -5px -2px,transparent -2px 1px)"></div>
<div class="a" style="left:417px;top:514px;width:19px;height:1px;background:repeating-linear-gradient(90deg,#8ae88a -5px -2px,transparent -2px 1px)"></div>
<div class="a" style="left:436px;top:300px;width:20px;height:1px;background:#a0a0f4"></div>
<div class="a" style="left:436px;top:300px;width:1px;height:256px;background:#a0a0f4"></div>
<div class="a" style="left:455px;top:300px;width:1px;height:256px;background:#a0a0f4"></div>
<div class="a" style="left:436px;top:555px;width:20px;height:1px;background:#a0a0f4"></div>
<div class="a" style="left:437px;top:342px;width:18px;height:1px;background:repeating-linear-gradient(90deg,#a0a0f4 -1px 2px,transparent 2px 5px)"></div>
<div class="a" style="left:437px;top:428px;width:18px;height:1px;background:repeating-linear-gradient(90deg,#a0a0f4 -1px 2px,transparent 2px 5px)"></div>
<div class="a" style="left:437px;top:514px;width:18px;height:1px;background:repeating-linear-gradient(90deg,#a0a0f4 -1px 2px,transparent 2px 5px)"></div>
<div class="a" style="left:455px;top:530px;width:21px;height:1px;background:#a0a0f4"></div>
<div class="a" style="left:455px;top:530px;width:1px;height:26px;background:#a0a0f4"></div>
<div class="a" style="left:475px;top:530px;width:1px;height:26px;background:#a0a0f4"></div>
<div class="a" style="left:455px;top:555px;width:21px;height:1px;background:#a0a0f4"></div>
<div class="a" style="left:475px;top:300px;width:21px;height:1px;background:#8ae88a"></div>
<div class="a" style="left:475px;top:300px;width:1px;height:256px;background:#8ae88a"></div>
<div class="a" style="left:495px;top:300px;width:1px;height:256px;background:#8ae88a"></div>
<div class="a" style="left:475px;top:555px;width:21px;height:1px;background:#8ae88a"></div>
<div class="a" style="left:476px;top:342px;width:19px;height:1px;background:repeating-linear-gradient(90deg,#8ae88a -4px -1px,transparent -1px 2px)"></div>
<div class="a" style="left:476px;top:428px;width:19px;height:1px;background:repeating-linear-gradient(90deg,#8ae88a -4px -1px,transparent -1px 2px)"></div>
<div class="a" style="left:476px;top:514px;width:19px;height:1px;background:repeating-linear-gradient(90deg,#8ae88a -4px -1px,transparent -1px 2px)"></div>
<div class="a" style="left:495px;top:538px;width:20px;height:1px;background:#a0a0f4"></div>
<div class="a" style="left:495px;top:300px;width:20px;height:1px;background:#a0a0f4"></div>
<div class="a" style="left:495px;top:300px;width:1px;height:256px;background:#a0a0f4"></div>
<div class="a" style="left:514px;top:300px;width:1px;height:256px;background:#a0a0f4"></div>
<div class="a" style="left:495px;top:555px;width:20px;height:1px;background:#a0a0f4"></div>
<div class="a" style="left:496px;top:342px;width:18px;height:1px;background:repeating-linear-gradient(90deg,#a0a0f4 0px 3px,transparent 3px 6px)"></div>
<div class="a" style="left:496px;top:428px;width:18px;height:1px;background:repeating-linear-gradient(90deg,#a0a0f4 0px 3px,transparent 3px 6px)"></div>
<div class="a" style="left:496px;top:514px;width:18px;height:1px;background:repeating-linear-gradient(90deg,#a0a0f4 0px 3px,transparent 3px 6px)"></div>
<div class="a" style="left:514px;top:300px;width:21px;height:1px;background:#a0a0f4"></div>
<div class="a" style="left:514px;top:300px;width:1px;height:256px;background:#a0a0f4"></div>
<div class="a" style="left:534px;top:300px;width:1px;height:256px;background:#a0a0f4"></div>
<div class="a" style="left:514px;top:555px;width:21px;height:1px;background:#a0a0f4"></div>
<div class="a" style="left:515px;top:342px;width:19px;height:1px;background:repeating-linear-gradient(90deg,#a0a0f4 -1px 2px,transparent 2px 5px)"></div>
<div class="a" style="left:515px;top:428px;width:19px;height:1px;background:repeating-linear-gradient(90deg,#a0a0f4 -1px 2px,transparent 2px 5px)"></div>
<div class="a" style="left:515px;top:514px;width:19px;height:1px;background:repeating-linear-gradient(90deg,#a0a0f4 -1px 2px,transparent 2px 5px)"></div>
<div class="a" style="left:534px;top:521px;width:21px;height:1px;background:#a0a0f4"></div>
<div class="a" style="left:534px;top:521px;width:1px;height:35px;background:#a0a0f4"></div>
<div class="a" style="left:554px;top:521px;width:1px;height:35px;background:#a0a0f4"></div>
<div class="a" style="left:534px;top:555px;width:21px;height:1px;background:#a0a0f4"></div>
<div class="a" style="left:554px;top:530px;width:20px;height:1px;background:#8ae88a"></div>
<div class="a" style="left:554px;top:300px;width:20px;height:1px;background:#8ae88a"></div>
<div class="a" style="left:554px;top:300px;width:1px;height:256px;background:#8ae88a"></div>
<div class="a" style="left:573px;top:300px;width:1px;height:256px;background:#8ae88a"></div>
<div class="a" style="left:554px;top:555px;width:20px;height:1px;background:#8ae88a"></div>
<div class="a" style="left:555px;top:342px;width:18px;height:1px;background:repeating-linear-gradient(90deg,#8ae88a -5px -2px,transparent -2px 1px)"></div>
<div class="a" style="left:555px;top:428px;width:18px;height:1px;background:repeating-linear-gradient(90deg,#8ae88a -5px -2px,transparent -2px 1px)"></div>
<div class="a" style="left:555px;top:514px;width:18px;height:1px;background:repeating-linear-gradient(90deg,#8ae88a -5px -2px,transparent -2px 1px)"></div>
<div class="a" style="left:573px;top:530px;width:21px;height:1px;background:#8ae88a"></div>
<div class="a" style="left:573px;top:300px;width:21px;height:1px;background:#8ae88a"></div>
<div class="a" style="left:573px;top:300px;width:1px;height:256px;background:#8ae88a"></div>
<div class="a" style="left:593px;top:300px;width:1px;height:256px;background:#8ae88a"></div>
<div class="a" style="left:573px;top:555px;width:21px;height:1px;background:#8ae88a"></div>
<div class="a" style="left:574px;top:342px;width:19px;height:1px;background:repeating-linear-gradient(90deg,#8ae88a 0px 3px,transparent 3px 6px)"></div>
<div class="a" style="left:574px;top:428px;width:19px;height:1px;background:repeating-linear-gradient(90deg,#8ae88a 0px 3px,transparent 3px 6px)"></div>
<div class="a" style="left:574px;top:514px;width:19px;height:1px;background:repeating-linear-gradient(90deg,#8ae88a 0px 3px,transparent 3px 6px)"></div>
<div class="a" style="left:593px;top:300px;width:20px;height:1px;background:#8ae88a"></div>
<div class="a" style="left:593px;top:300px;width:1px;height:256px;background:#8ae88a"></div>
<div class="a" style="left:612px;top:300px;width:1px;height:256px;background:#8ae88a"></div>
<div class="a" style="left:593px;top:555px;width:20px;height:1px;background:#8ae88a"></div>
<div class="a" style="left:594px;top:342px;width:18px;height:1px;background:repeating-linear-gradient(90deg,#8ae88a -2px 1px,transparent 1px 4px)"></div>
<div class="a" style="left:594px;top:428px;width:18px;height:1px;background:repeating-linear-gradient(90deg,#8ae88a -2px 1px,transparent 1px 4px)"></div>
<div class="a" style="left:594px;top:514px;width:18px;height:1px;background:repeating-linear-gradient(90deg,#8ae88a -2px 1px,transparent 1px 4px)"></div>
<div class="a" style="left:612px;top:300px;width:19px;height:1px;background:#8ae88a"></div>
<div class="a" style="left:612px;top:300px;width:1px;height:256px;background:#8ae88a"></div>
<div class="a" style="left:612px;top:555px;width:19px;height:1px;background:#8ae88a"></div>
<div class="a" style="left:613px;top:342px;width:17px;height:1px;background:repeating-linear-gradient(90deg,#8ae88a -3px 0px,transparent 0px 3px)"></div>
<div class="a" style="left:613px;top:428px;width:17px;height:1px;background:repeating-linear-gradient(90deg,#8ae88a -3px 0px,transparent 0px 3px)"></div>
<div class="a" style="left:613px;top:514px;width:17px;height:1px;background:repeating-linear-gradient(90deg,#8ae88a -3px 0px,transparent 0px 3px)"></div>
<div class="a" style="left:5px;top:129px;width:18px;height:426px;overflow:hidden"><div class="a" style="left:-1px;top:0;width:19px;height:426px">
<div class="t" style="left:50%;transform:translateX(-50%) scaleX(0.8);top:128px;font-size:9px;color:#005000">G2</div>
<div class="t" style="left:50%;transform:translateX(-50%) scaleX(0.8);top:411.5px;font-size:14px;font-weight:bold;letter-spacing:2px;text-indent:2px;-webkit-text-stroke:0.35px #000;color:#000">40</div>
</div></div>
<div class="a" style="left:24px;top:129px;width:19px;height:426px;overflow:hidden"><div class="a" style="left:-1px;top:0;width:20px;height:426px">
<div class="t" style="left:50%;transform:translateX(-50%) scaleX(0.8);top:256px;font-size:9px;color:#005000">L2C</div>
<div class="t" style="left:50%;transform:translateX(-50%) scaleX(0.8);top:411.5px;font-size:14px;font-weight:bold;letter-spacing:2px;text-indent:2px;-webkit-text-stroke:0.35px #000;color:#000">25</div>
</div></div>
<div class="a" style="left:44px;top:129px;width:18px;height:426px;overflow:hidden"><div class="a" style="left:-1px;top:0;width:19px;height:426px">
<div class="t" style="left:50%;transform:translateX(-50%) scaleX(0.8);top:248px;font-size:9px;color:#005000">L1C/A</div>
<div class="t" style="left:50%;transform:translateX(-50%) scaleX(0.8);top:265px;font-size:9px;color:#005000">L2C</div>
<div class="t" style="left:50%;transform:translateX(-50%) scaleX(0.8);top:411.5px;font-size:14px;font-weight:bold;letter-spacing:2px;text-indent:2px;-webkit-text-stroke:0.35px #000;color:#000">24</div>
<div class="t" style="left:50%;transform:translateX(-50%) scaleX(0.8);top:396.5px;font-size:14px;font-weight:bold;letter-spacing:2px;text-indent:2px;-webkit-text-stroke:0.35px #000;color:#000">26</div>
</div></div>
<div class="a" style="left:63px;top:129px;width:19px;height:426px;overflow:hidden"><div class="a" style="left:-1px;top:0;width:20px;height:426px">
<div class="t" style="left:50%;transform:translateX(-50%) scaleX(0.8);top:102px;font-size:9px;color:#005000">G16</div>
<div class="t" style="left:50%;transform:translateX(-50%) scaleX(0.8);top:411.5px;font-size:14px;font-weight:bold;letter-spacing:2px;text-indent:2px;-webkit-text-stroke:0.35px #000;color:#000">43</div>
</div></div>
<div class="a" style="left:83px;top:129px;width:19px;height:426px;overflow:hidden"><div class="a" style="left:-1px;top:0;width:20px;height:426px">
<div class="t" style="left:50%;transform:translateX(-50%) scaleX(0.8);top:239px;font-size:9px;color:#005000">L2C</div>
<div class="t" style="left:50%;transform:translateX(-50%) scaleX(0.8);top:256px;font-size:9px;color:#005000">L1C/A</div>
<div class="t" style="left:50%;transform:translateX(-50%) scaleX(0.8);top:411.5px;font-size:14px;font-weight:bold;letter-spacing:2px;text-indent:2px;-webkit-text-stroke:0.35px #000;color:#000">25</div>
<div class="t" style="left:50%;transform:translateX(-50%) scaleX(0.8);top:396.5px;font-size:14px;font-weight:bold;letter-spacing:2px;text-indent:2px;-webkit-text-stroke:0.35px #000;color:#000">27</div>
</div></div>
<div class="a" style="left:103px;top:129px;width:18px;height:426px;overflow:hidden"><div class="a" style="left:-1px;top:0;width:19px;height:426px">
<div class="t" style="left:50%;transform:translateX(-50%) scaleX(0.8);top:179px;font-size:9px;color:#005000">L1C/A</div>
<div class="t" style="left:50%;transform:translateX(-50%) scaleX(0.8);top:248px;font-size:9px;color:#005000">L2C</div>
<div class="t" style="left:50%;transform:translateX(-50%) scaleX(0.8);top:411.5px;font-size:14px;font-weight:bold;letter-spacing:2px;text-indent:2px;-webkit-text-stroke:0.35px #000;color:#000">26</div>
<div class="t" style="left:50%;transform:translateX(-50%) scaleX(0.8);top:382.5px;font-size:14px;font-weight:bold;letter-spacing:2px;text-indent:2px;-webkit-text-stroke:0.35px #000;color:#000">34</div>
</div></div>
<div class="a" style="left:122px;top:129px;width:19px;height:426px;overflow:hidden"><div class="a" style="left:-1px;top:0;width:20px;height:426px">
<div class="t" style="left:50%;transform:translateX(-50%) scaleX(0.8);top:316px;font-size:9px;color:#005000">L2C</div>
<div class="t" style="left:50%;transform:translateX(-50%) scaleX(0.8);top:411.5px;font-size:14px;font-weight:bold;letter-spacing:2px;text-indent:2px;-webkit-text-stroke:0.35px #000;color:#000">18</div>
</div></div>
<div class="a" style="left:142px;top:129px;width:19px;height:426px;overflow:hidden"><div class="a" style="left:-1px;top:0;width:20px;height:426px">
<div class="t" style="left:50%;transform:translateX(-50%) scaleX(0.8);top:231px;font-size:9px;color:#005000">L1C/A</div>
<div class="t" style="left:50%;transform:translateX(-50%) scaleX(0.8);top:300px;font-size:9px;color:#005000">L2C</div>
<div class="t" style="left:50%;transform:translateX(-50%) scaleX(0.8);top:411.5px;font-size:14px;font-weight:bold;letter-spacing:2px;text-indent:2px;-webkit-text-stroke:0.35px #000;color:#000">20</div>
<div class="t" style="left:50%;transform:translateX(-50%) scaleX(0.8);top:382.5px;font-size:14px;font-weight:bold;letter-spacing:2px;text-indent:2px;-webkit-text-stroke:0.35px #000;color:#000">28</div>
</div></div>
<div class="a" style="left:162px;top:129px;width:18px;height:426px;overflow:hidden"><div class="a" style="left:-1px;top:0;width:19px;height:426px">
<div class="t" style="left:50%;transform:translateX(-50%) scaleX(0.8);top:188px;font-size:9px;color:#005000">R8</div>
<div class="t" style="left:50%;transform:translateX(-50%) scaleX(0.8);top:411.5px;font-size:14px;font-weight:bold;letter-spacing:2px;text-indent:2px;-webkit-text-stroke:0.35px #000;color:#000">33</div>
</div></div>
<div class="a" style="left:181px;top:129px;width:19px;height:426px;overflow:hidden"><div class="a" style="left:-1px;top:0;width:20px;height:426px">
<div class="t" style="left:50%;transform:translateX(-50%) scaleX(0.8);top:377px;font-size:9px;color:#a0a0ff">R13</div>
<div class="t" style="left:50%;transform:translateX(-50%) scaleX(0.8);top:411.5px;font-size:14px;font-weight:bold;letter-spacing:2px;text-indent:2px;-webkit-text-stroke:0.35px #dcdcff;color:#dcdcff">11</div>
</div></div>
<div class="a" style="left:201px;top:129px;width:19px;height:426px;overflow:hidden"><div class="a" style="left:-1px;top:0;width:20px;height:426px">
<div class="t" style="left:50%;transform:translateX(-50%) scaleX(0.8);top:111px;font-size:9px;color:#005000">R14</div>
<div class="t" style="left:50%;transform:translateX(-50%) scaleX(0.8);top:411.5px;font-size:14px;font-weight:bold;letter-spacing:2px;text-indent:2px;-webkit-text-stroke:0.35px #000;color:#000">42</div>
</div></div>
<div class="a" style="left:221px;top:129px;width:18px;height:426px;overflow:hidden"><div class="a" style="left:-1px;top:0;width:19px;height:426px">
<div class="t" style="left:50%;transform:translateX(-50%) scaleX(0.8);top:291px;font-size:9px;color:#005000">R15</div>
<div class="t" style="left:50%;transform:translateX(-50%) scaleX(0.8);top:411.5px;font-size:14px;font-weight:bold;letter-spacing:2px;text-indent:2px;-webkit-text-stroke:0.35px #000;color:#000">21</div>
</div></div>
<div class="a" style="left:240px;top:129px;width:19px;height:426px;overflow:hidden"><div class="a" style="left:-1px;top:0;width:20px;height:426px">
<div class="t" style="left:50%;transform:translateX(-50%) scaleX(0.8);top:172px;font-size:9px;color:#005000">R17</div>
<div class="t" style="left:50%;transform:translateX(-50%) scaleX(0.8);top:411.5px;font-size:14px;font-weight:bold;letter-spacing:2px;text-indent:2px;-webkit-text-stroke:0.35px #000;color:#000">33</div>
</div></div>
<div class="a" style="left:260px;top:129px;width:19px;height:426px;overflow:hidden"><div class="a" style="left:-1px;top:0;width:20px;height:426px">
<div class="t" style="left:50%;transform:translateX(-50%) scaleX(0.8);top:172px;font-size:9px;color:#005000">R23</div>
<div class="t" style="left:50%;transform:translateX(-50%) scaleX(0.8);top:411.5px;font-size:14px;font-weight:bold;letter-spacing:2px;text-indent:2px;-webkit-text-stroke:0.35px #000;color:#000">28</div>
</div></div>
<div class="a" style="left:280px;top:129px;width:18px;height:426px;overflow:hidden"><div class="a" style="left:-1px;top:0;width:19px;height:426px">
<div class="t" style="left:50%;transform:translateX(-50%) scaleX(0.8);top:411.5px;font-size:14px;font-weight:bold;letter-spacing:2px;text-indent:2px;-webkit-text-stroke:0.35px #dcdcff;color:#dcdcff">45</div>
</div></div>
<div class="a" style="left:299px;top:129px;width:19px;height:426px;overflow:hidden"><div class="a" style="left:-1px;top:0;width:20px;height:426px">
<div class="t" style="left:50%;transform:translateX(-50%) scaleX(0.8);top:411.5px;font-size:14px;font-weight:bold;letter-spacing:2px;text-indent:2px;-webkit-text-stroke:0.35px #dcdcff;color:#dcdcff">42</div>
</div></div>
<div class="a" style="left:319px;top:129px;width:18px;height:426px;overflow:hidden"><div class="a" style="left:-1px;top:0;width:19px;height:426px">
<div class="t" style="left:50%;transform:translateX(-50%) scaleX(0.8);top:411.5px;font-size:14px;font-weight:bold;letter-spacing:2px;text-indent:2px;-webkit-text-stroke:0.35px #000;color:#000">31</div>
<div class="t" style="left:50%;transform:translateX(-50%) scaleX(0.8);top:396.5px;font-size:14px;font-weight:bold;letter-spacing:2px;text-indent:2px;-webkit-text-stroke:0.35px #000;color:#000">35</div>
</div></div>
<div class="a" style="left:338px;top:129px;width:19px;height:426px;overflow:hidden"><div class="a" style="left:-1px;top:0;width:20px;height:426px">
<div class="t" style="left:50%;transform:translateX(-50%) scaleX(0.8);top:411.5px;font-size:14px;font-weight:bold;letter-spacing:2px;text-indent:2px;-webkit-text-stroke:0.35px #000;color:#000">47</div>
<div class="t" style="left:50%;transform:translateX(-50%) scaleX(0.8);top:396.5px;font-size:14px;font-weight:bold;letter-spacing:2px;text-indent:2px;-webkit-text-stroke:0.35px #000;color:#000">48</div>
</div></div>
<div class="a" style="left:358px;top:129px;width:19px;height:426px;overflow:hidden"><div class="a" style="left:-1px;top:0;width:20px;height:426px">
<div class="t" style="left:50%;transform:translateX(-50%) scaleX(0.8);top:411.5px;font-size:14px;font-weight:bold;letter-spacing:2px;text-indent:2px;-webkit-text-stroke:0.35px #000;color:#000">21</div>
</div></div>
<div class="a" style="left:378px;top:129px;width:18px;height:426px;overflow:hidden"><div class="a" style="left:-1px;top:0;width:19px;height:426px">
<div class="t" style="left:50%;transform:translateX(-50%) scaleX(0.8);top:411.5px;font-size:14px;font-weight:bold;letter-spacing:2px;text-indent:2px;-webkit-text-stroke:0.35px #000;color:#000">41</div>
<div class="t" style="left:50%;transform:translateX(-50%) scaleX(0.8);top:396.5px;font-size:14px;font-weight:bold;letter-spacing:2px;text-indent:2px;-webkit-text-stroke:0.35px #000;color:#000">44</div>
</div></div>
<div class="a" style="left:397px;top:129px;width:19px;height:426px;overflow:hidden"><div class="a" style="left:-1px;top:0;width:20px;height:426px">
<div class="t" style="left:50%;transform:translateX(-50%) scaleX(0.8);top:411.5px;font-size:14px;font-weight:bold;letter-spacing:2px;text-indent:2px;-webkit-text-stroke:0.35px #dcdcff;color:#dcdcff">8</div>
<div class="t" style="left:50%;transform:translateX(-50%) scaleX(0.8);top:396.5px;font-size:14px;font-weight:bold;letter-spacing:2px;text-indent:2px;-webkit-text-stroke:0.35px #dcdcff;color:#dcdcff">33</div>
</div></div>
<div class="a" style="left:417px;top:129px;width:19px;height:426px;overflow:hidden"><div class="a" style="left:-1px;top:0;width:20px;height:426px">
<div class="t" style="left:50%;transform:translateX(-50%) scaleX(0.8);top:411.5px;font-size:14px;font-weight:bold;letter-spacing:2px;text-indent:2px;-webkit-text-stroke:0.35px #000;color:#000">21</div>
<div class="t" style="left:50%;transform:translateX(-50%) scaleX(0.8);top:396.5px;font-size:14px;font-weight:bold;letter-spacing:2px;text-indent:2px;-webkit-text-stroke:0.35px #000;color:#000">24</div>
</div></div>
<div class="a" style="left:437px;top:129px;width:18px;height:426px;overflow:hidden"><div class="a" style="left:-1px;top:0;width:19px;height:426px">
<div class="t" style="left:50%;transform:translateX(-50%) scaleX(0.8);top:396.5px;font-size:14px;font-weight:bold;letter-spacing:2px;text-indent:2px;-webkit-text-stroke:0.35px #dcdcff;color:#dcdcff">46</div>
</div></div>
<div class="a" style="left:456px;top:129px;width:19px;height:426px;overflow:hidden"><div class="a" style="left:-1px;top:0;width:20px;height:426px">
<div class="t" style="left:50%;transform:translateX(-50%) scaleX(0.8);top:402px;font-size:9px;color:#a0a0ff">B2</div>
<div class="t" style="left:50%;transform:translateX(-50%) scaleX(0.8);top:411.5px;font-size:14px;font-weight:bold;letter-spacing:2px;text-indent:2px;-webkit-text-stroke:0.35px #dcdcff;color:#dcdcff">8</div>
</div></div>
<div class="a" style="left:476px;top:129px;width:19px;height:426px;overflow:hidden"><div class="a" style="left:-1px;top:0;width:20px;height:426px">
<div class="t" style="left:50%;transform:translateX(-50%) scaleX(0.8);top:411.5px;font-size:14px;font-weight:bold;letter-spacing:2px;text-indent:2px;-webkit-text-stroke:0.35px #000;color:#000">19</div>
</div></div>
<div class="a" style="left:496px;top:129px;width:18px;height:426px;overflow:hidden"><div class="a" style="left:-1px;top:0;width:19px;height:426px">
<div class="t" style="left:50%;transform:translateX(-50%) scaleX(0.8);top:410px;font-size:9px;color:#a0a0ff">B2</div>
<div class="t" style="left:50%;transform:translateX(-50%) scaleX(0.8);top:411.5px;font-size:14px;font-weight:bold;letter-spacing:2px;text-indent:2px;-webkit-text-stroke:0.35px #dcdcff;color:#dcdcff">7</div>
<div class="t" style="left:50%;transform:translateX(-50%) scaleX(0.8);top:396.5px;font-size:14px;font-weight:bold;letter-spacing:2px;text-indent:2px;-webkit-text-stroke:0.35px #dcdcff;color:#dcdcff">22</div>
</div></div>
<div class="a" style="left:515px;top:129px;width:19px;height:426px;overflow:hidden"><div class="a" style="left:-1px;top:0;width:20px;height:426px">
<div class="t" style="left:50%;transform:translateX(-50%) scaleX(0.8);top:396.5px;font-size:14px;font-weight:bold;letter-spacing:2px;text-indent:2px;-webkit-text-stroke:0.35px #dcdcff;color:#dcdcff">17</div>
</div></div>
<div class="a" style="left:535px;top:129px;width:19px;height:426px;overflow:hidden"><div class="a" style="left:-1px;top:0;width:20px;height:426px">
<div class="t" style="left:50%;transform:translateX(-50%) scaleX(0.8);top:393px;font-size:9px;color:#a0a0ff">B2</div>
<div class="t" style="left:50%;transform:translateX(-50%) scaleX(0.8);top:411.5px;font-size:14px;font-weight:bold;letter-spacing:2px;text-indent:2px;-webkit-text-stroke:0.35px #dcdcff;color:#dcdcff">9</div>
</div></div>
<div class="a" style="left:555px;top:129px;width:18px;height:426px;overflow:hidden"><div class="a" style="left:-1px;top:0;width:19px;height:426px">
<div class="t" style="left:50%;transform:translateX(-50%) scaleX(0.8);top:411.5px;font-size:14px;font-weight:bold;letter-spacing:2px;text-indent:2px;-webkit-text-stroke:0.35px #000;color:#000">8</div>
<div class="t" style="left:50%;transform:translateX(-50%) scaleX(0.8);top:396.5px;font-size:14px;font-weight:bold;letter-spacing:2px;text-indent:2px;-webkit-text-stroke:0.35px #000;color:#000">37</div>
</div></div>
<div class="a" style="left:574px;top:129px;width:19px;height:426px;overflow:hidden"><div class="a" style="left:-1px;top:0;width:20px;height:426px">
<div class="t" style="left:50%;transform:translateX(-50%) scaleX(0.8);top:411.5px;font-size:14px;font-weight:bold;letter-spacing:2px;text-indent:2px;-webkit-text-stroke:0.35px #000;color:#000">8</div>
<div class="t" style="left:50%;transform:translateX(-50%) scaleX(0.8);top:396.5px;font-size:14px;font-weight:bold;letter-spacing:2px;text-indent:2px;-webkit-text-stroke:0.35px #000;color:#000">18</div>
</div></div>
<div class="a" style="left:594px;top:129px;width:18px;height:426px;overflow:hidden"><div class="a" style="left:-1px;top:0;width:19px;height:426px">
<div class="t" style="left:50%;transform:translateX(-50%) scaleX(0.8);top:411.5px;font-size:14px;font-weight:bold;letter-spacing:2px;text-indent:2px;-webkit-text-stroke:0.35px #000;color:#000">36</div>
</div></div>
<div class="a" style="left:613px;top:129px;width:17px;height:426px;overflow:hidden"><div class="a" style="left:-1px;top:0;width:18px;height:426px">
<div class="t" style="left:50%;transform:translateX(-50%) scaleX(0.8);top:411.5px;font-size:14px;font-weight:bold;letter-spacing:2px;text-indent:2px;-webkit-text-stroke:0.35px #000;color:#000">43</div>
<div class="t" style="left:50%;transform:translateX(-50%) scaleX(0.8);top:378.5px;font-size:14px;font-weight:bold;letter-spacing:2px;text-indent:2px;-webkit-text-stroke:0.35px #a0f0a0;color:#a0f0a0">10</div>
</div></div>
<div class="t" style="left:13.5px;top:557px;font-size:13px;color:#d8d8d8;-webkit-text-stroke:0.3px #d8d8d8;background:#000;transform:translateX(-50%);letter-spacing:0.6px;padding:0 0 0 0.6px">G2</div>
<div class="t" style="left:33.0px;top:557px;font-size:13px;color:#d8d8d8;-webkit-text-stroke:0.3px #d8d8d8;background:#000;transform:translateX(-50%);letter-spacing:0.6px;padding:0 0 0 0.6px">G8</div>
<div class="t" style="left:52.5px;top:557px;font-size:13px;color:#d8d8d8;-webkit-text-stroke:0.3px #d8d8d8;background:#000;transform:translateX(-50%);letter-spacing:0.6px;padding:0 0 0 0.6px">G10</div>
<div class="t" style="left:72.0px;top:557px;font-size:13px;color:#d8d8d8;-webkit-text-stroke:0.3px #d8d8d8;background:#000;transform:translateX(-50%);letter-spacing:0.6px;padding:0 0 0 0.6px">G16</div>
<div class="t" style="left:92.0px;top:557px;font-size:13px;color:#d8d8d8;-webkit-text-stroke:0.3px #d8d8d8;background:#000;transform:translateX(-50%);letter-spacing:0.6px;padding:0 0 0 0.6px">G18</div>
<div class="t" style="left:111.5px;top:557px;font-size:13px;color:#d8d8d8;-webkit-text-stroke:0.3px #d8d8d8;background:#000;transform:translateX(-50%);letter-spacing:0.6px;padding:0 0 0 0.6px">G26</div>
<div class="t" style="left:131.0px;top:557px;font-size:13px;color:#d8d8d8;-webkit-text-stroke:0.3px #d8d8d8;background:#000;transform:translateX(-50%);letter-spacing:0.6px;padding:0 0 0 0.6px">G26</div>
<div class="t" style="left:151.0px;top:557px;font-size:13px;color:#d8d8d8;-webkit-text-stroke:0.3px #d8d8d8;background:#000;transform:translateX(-50%);letter-spacing:0.6px;padding:0 0 0 0.6px">G27</div>
<div class="t" style="left:170.5px;top:557px;font-size:13px;color:#d8d8d8;-webkit-text-stroke:0.3px #d8d8d8;background:#000;transform:translateX(-50%);letter-spacing:0.6px;padding:0 0 0 0.6px">R8</div>
<div class="t" style="left:190.0px;top:557px;font-size:13px;color:#d8d8d8;-webkit-text-stroke:0.3px #d8d8d8;background:#000;transform:translateX(-50%);letter-spacing:0.6px;padding:0 0 0 0.6px">R13</div>
<div class="t" style="left:210.0px;top:557px;font-size:13px;color:#d8d8d8;-webkit-text-stroke:0.3px #d8d8d8;background:#000;transform:translateX(-50%);letter-spacing:0.6px;padding:0 0 0 0.6px">R14</div>
<div class="t" style="left:229.5px;top:557px;font-size:13px;color:#d8d8d8;-webkit-text-stroke:0.3px #d8d8d8;background:#000;transform:translateX(-50%);letter-spacing:0.6px;padding:0 0 0 0.6px">R15</div>
<div class="t" style="left:249.0px;top:557px;font-size:13px;color:#d8d8d8;-webkit-text-stroke:0.3px #d8d8d8;background:#000;transform:translateX(-50%);letter-spacing:0.6px;padding:0 0 0 0.6px">R17</div>
<div class="t" style="left:269.0px;top:557px;font-size:13px;color:#d8d8d8;-webkit-text-stroke:0.3px #d8d8d8;background:#000;transform:translateX(-50%);letter-spacing:0.6px;padding:0 0 0 0.6px">R23</div>
<div class="t" style="left:288.5px;top:557px;font-size:13px;color:#d8d8d8;-webkit-text-stroke:0.3px #d8d8d8;background:#000;transform:translateX(-50%);letter-spacing:0.6px;padding:0 0 0 0.6px">B12</div>
<div class="t" style="left:308.0px;top:557px;font-size:13px;color:#d8d8d8;-webkit-text-stroke:0.3px #d8d8d8;background:#000;transform:translateX(-50%);letter-spacing:0.6px;padding:0 0 0 0.6px">B13</div>
<div class="t" style="left:327.5px;top:557px;font-size:13px;color:#d8d8d8;-webkit-text-stroke:0.3px #d8d8d8;background:#000;transform:translateX(-50%);letter-spacing:0.6px;padding:0 0 0 0.6px">E1</div>
<div class="t" style="left:347.0px;top:557px;font-size:13px;color:#d8d8d8;-webkit-text-stroke:0.3px #d8d8d8;background:#000;transform:translateX(-50%);letter-spacing:0.6px;padding:0 0 0 0.6px">E23</div>
<div class="t" style="left:367.0px;top:557px;font-size:13px;color:#d8d8d8;-webkit-text-stroke:0.3px #d8d8d8;background:#000;transform:translateX(-50%);letter-spacing:0.6px;padding:0 0 0 0.6px">E3</div>
<div class="t" style="left:386.5px;top:557px;font-size:13px;color:#d8d8d8;-webkit-text-stroke:0.3px #d8d8d8;background:#000;transform:translateX(-50%);letter-spacing:0.6px;padding:0 0 0 0.6px">E33</div>
<div class="t" style="left:406.0px;top:557px;font-size:13px;color:#d8d8d8;-webkit-text-stroke:0.3px #d8d8d8;background:#000;transform:translateX(-50%);letter-spacing:0.6px;padding:0 0 0 0.6px">B6</div>
<div class="t" style="left:426.0px;top:557px;font-size:13px;color:#d8d8d8;-webkit-text-stroke:0.3px #d8d8d8;background:#000;transform:translateX(-50%);letter-spacing:0.6px;padding:0 0 0 0.6px">B8</div>
<div class="t" style="left:445.5px;top:557px;font-size:13px;color:#d8d8d8;-webkit-text-stroke:0.3px #d8d8d8;background:#000;transform:translateX(-50%);letter-spacing:0.6px;padding:0 0 0 0.6px">B10</div>
<div class="t" style="left:465.0px;top:557px;font-size:13px;color:#d8d8d8;-webkit-text-stroke:0.3px #d8d8d8;background:#000;transform:translateX(-50%);letter-spacing:0.6px;padding:0 0 0 0.6px">B11</div>
<div class="t" style="left:485.0px;top:557px;font-size:13px;color:#d8d8d8;-webkit-text-stroke:0.3px #d8d8d8;background:#000;transform:translateX(-50%);letter-spacing:0.6px;padding:0 0 0 0.6px">B13</div>
<div class="t" style="left:504.5px;top:557px;font-size:13px;color:#d8d8d8;-webkit-text-stroke:0.3px #d8d8d8;background:#000;transform:translateX(-50%);letter-spacing:0.6px;padding:0 0 0 0.6px">B14</div>
<div class="t" style="left:524.0px;top:557px;font-size:13px;color:#d8d8d8;-webkit-text-stroke:0.3px #d8d8d8;background:#000;transform:translateX(-50%);letter-spacing:0.6px;padding:0 0 0 0.6px">B16</div>
<div class="t" style="left:544.0px;top:557px;font-size:13px;color:#d8d8d8;-webkit-text-stroke:0.3px #d8d8d8;background:#000;transform:translateX(-50%);letter-spacing:0.6px;padding:0 0 0 0.6px">B21</div>
<div class="t" style="left:563.5px;top:557px;font-size:13px;color:#d8d8d8;-webkit-text-stroke:0.3px #d8d8d8;background:#000;transform:translateX(-50%);letter-spacing:0.6px;padding:0 0 0 0.6px">B27</div>
<div class="t" style="left:583.0px;top:557px;font-size:13px;color:#d8d8d8;-webkit-text-stroke:0.3px #d8d8d8;background:#000;transform:translateX(-50%);letter-spacing:0.6px;padding:0 0 0 0.6px">B28</div>
<div class="t" style="left:602.5px;top:557px;font-size:13px;color:#d8d8d8;-webkit-text-stroke:0.3px #d8d8d8;background:#000;transform:translateX(-50%);letter-spacing:0.6px;padding:0 0 0 0.6px">B45</div>
<div class="t" style="left:621.0px;top:557px;font-size:13px;color:#d8d8d8;-webkit-text-stroke:0.3px #d8d8d8;background:#000;transform:translateX(-50%);letter-spacing:0.6px;padding:0 0 0 0.6px">B6</div>
<div class="a" style="left:708px;top:132px;width:200px;height:12px;background:#424242"></div>
<div class="t" style="right:9px;top:133px;font-size:12px;color:#d8d8d8;transform:scaleX(0.88);transform-origin:right top">1.53023641 °</div>
<div class="a" style="left:708px;top:145px;width:200px;height:12px;background:#424242"></div>
<div class="t" style="right:9px;top:146px;font-size:12px;color:#d8d8d8;transform:scaleX(0.88);transform-origin:right top">42.50827507 °</div>
<div class="a" style="left:708px;top:158px;width:200px;height:12px;background:#424242"></div>
<div class="t" style="right:9px;top:159px;font-size:12px;color:#d8d8d8;transform:scaleX(0.88);transform-origin:right top">1078.812 m</div>
<div class="a" style="left:708px;top:171px;width:200px;height:12px;background:#424242"></div>
<div class="t" style="right:9px;top:172px;font-size:12px;color:#d8d8d8;transform:scaleX(0.88);transform-origin:right top">1029.775 m</div>
<div class="a" style="left:708px;top:184px;width:200px;height:12px;background:#424242"></div>
<div class="a" style="left:708px;top:197px;width:200px;height:12px;background:#424242"></div>
<div class="t" style="right:9px;top:198px;font-size:12px;color:#38e038;transform:scaleX(1.0);transform-origin:right top">3D/DGNSS</div>
<div class="a" style="left:708px;top:210px;width:200px;height:12px;background:#424242"></div>
<div class="a" style="left:708px;top:223px;width:200px;height:12px;background:#424242"></div>
<div class="a" style="left:708px;top:236px;width:200px;height:12px;background:#424242"></div>
<div class="a" style="left:708px;top:249px;width:200px;height:12px;background:#424242"></div>
<div class="t" style="left:709px;top:237px;font-size:12px;color:#d8d8d8;transform:scaleX(0.88);transform-origin:left top">0</div>
<div class="t" style="left:772px;top:237px;font-size:12px;color:#d8d8d8;transform:scaleX(0.88);transform-origin:left top">1.5</div>
<div class="a" style="left:767px;top:237px;width:3px;height:10px;background:#00c000"></div>
<div class="t" style="right:9px;top:237px;font-size:12px;color:#d8d8d8;transform:scaleX(0.88);transform-origin:right top">5</div>
<div class="t" style="left:709px;top:250px;font-size:12px;color:#d8d8d8;transform:scaleX(0.88);transform-origin:left top">0</div>
<div class="t" style="left:741px;top:250px;font-size:12px;color:#d8d8d8;transform:scaleX(0.88);transform-origin:left top">0.7</div>
<div class="a" style="left:736px;top:250px;width:3px;height:10px;background:#00c000"></div>
<div class="t" style="right:9px;top:250px;font-size:12px;color:#d8d8d8;transform:scaleX(0.88);transform-origin:right top">5</div>
<div class="a" style="left:708px;top:263px;width:5px;height:11px;background:#00c000"></div>
<div class="a" style="left:714px;top:263px;width:5px;height:11px;background:#00c000"></div>
<div class="a" style="left:720px;top:263px;width:5px;height:11px;background:#00c000"></div>
<div class="a" style="left:726px;top:263px;width:5px;height:11px;background:#00c000"></div>
<div class="a" style="left:734px;top:263px;width:5px;height:11px;background:#00c000"></div>
<div class="a" style="left:740px;top:263px;width:5px;height:11px;background:#00c000"></div>
<div class="a" style="left:746px;top:263px;width:5px;height:11px;background:#00c000"></div>
<div class="a" style="left:752px;top:263px;width:5px;height:11px;background:#00c000"></div>
<div class="a" style="left:760px;top:263px;width:5px;height:11px;background:#00c000"></div>
<div class="a" style="left:766px;top:263px;width:5px;height:11px;background:#0000c8"></div>
<div class="a" style="left:772px;top:263px;width:5px;height:11px;background:#00c000"></div>
<div class="a" style="left:778px;top:263px;width:5px;height:11px;background:#00c000"></div>
<div class="a" style="left:786px;top:263px;width:5px;height:11px;background:#00c000"></div>
<div class="a" style="left:792px;top:263px;width:5px;height:11px;background:#00c000"></div>
<div class="a" style="left:798px;top:263px;width:5px;height:11px;background:#0000c8"></div>
<div class="a" style="left:804px;top:263px;width:5px;height:11px;background:#0000c8"></div>
<div class="a" style="left:812px;top:263px;width:5px;height:11px;background:#00c000"></div>
<div class="a" style="left:818px;top:263px;width:5px;height:11px;background:#00c000"></div>
<div class="a" style="left:824px;top:263px;width:5px;height:11px;background:#00c000"></div>
<div class="a" style="left:830px;top:263px;width:5px;height:11px;background:#00c000"></div>
<div class="a" style="left:838px;top:263px;width:5px;height:11px;background:#0000c8"></div>
<div class="a" style="left:844px;top:263px;width:5px;height:11px;background:#00c000"></div>
<div class="a" style="left:850px;top:263px;width:5px;height:11px;background:#0000c8"></div>
<div class="a" style="left:856px;top:263px;width:5px;height:11px;background:#0000c8"></div>
<div class="a" style="left:864px;top:263px;width:5px;height:11px;background:#00c000"></div>
<div class="a" style="left:870px;top:263px;width:5px;height:11px;background:#0000c8"></div>
<div class="a" style="left:876px;top:263px;width:5px;height:11px;background:#0000c8"></div>
<div class="a" style="left:882px;top:263px;width:5px;height:11px;background:#0000c8"></div>
<div class="a" style="left:890px;top:263px;width:5px;height:11px;background:#00c000"></div>
<div class="a" style="left:896px;top:263px;width:5px;height:11px;background:#00c000"></div>
<div class="a" style="left:902px;top:263px;width:5px;height:11px;background:#00c000"></div>
<div class="a" style="left:908px;top:263px;width:5px;height:11px;background:#00c000"></div>
<div class="t" style="right:222px;top:133px;font-size:12px;color:#d8d8d8;transform:scaleX(0.88);transform-origin:right top">Latitude</div>
<div class="t" style="right:211px;top:172px;font-size:12px;color:#d8d8d8;transform:scaleX(0.88);transform-origin:right top">Altitude (msl)</div>
<div class="t" style="right:227px;top:198px;font-size:12px;color:#d8d8d8;transform:scaleX(0.88);transform-origin:right top">Fix Mode</div>
<div class="t" style="right:214px;top:211px;font-size:12px;color:#d8d8d8;transform:scaleX(0.88);transform-origin:right top">3D Acc. [m]</div>
<div class="t" style="right:214px;top:224px;font-size:12px;color:#d8d8d8;transform:scaleX(0.88);transform-origin:right top">2D Acc. [m]</div>
<div class="t" style="right:228px;top:264px;font-size:12px;color:#d8d8d8;transform:scaleX(0.88);transform-origin:right top">Satellites</div>
<div class="a" style="left:0;top:577px;width:917px;height:1px;background:#b4b4b4"></div>
<div class="t" style="left:1px;top:584px;font-size:12px;color:#000;transform:scaleX(0.88);transform-origin:left top">Ready</div>
<div class="a" style="left:122px;top:581px;width:226px;height:16px;border-top:1px solid #a0a0a0;border-left:1px solid #a0a0a0;box-shadow:inset 1px 1px 0 #fff"></div>
<svg class="a" style="left:124px;top:586px" width="16" height="7" viewBox="0 0 16 7"><rect x="0" y="2" width="3" height="1" fill="#000"/><rect x="0" y="4" width="3" height="1" fill="#000"/><path d="M2.5 1.5Q2.5 0 4 0H7V7H4Q2.5 7 2.5 5.5Z" fill="#000"/><rect x="3.6" y="1.3" width="1.8" height="4.4" fill="#d0d0d0"/><path d="M13.5 1.5Q13.5 0 12 0H9V7H12Q13.5 7 13.5 5.5Z" fill="#000"/><rect x="10.6" y="1.3" width="1.8" height="4.4" fill="#d0d0d0"/><rect x="13" y="2" width="3" height="1" fill="#000"/><rect x="13" y="4" width="3" height="1" fill="#000"/></svg>
<div class="t" style="left:144px;top:584px;font-size:12px;transform:scaleX(0.975);transform-origin:left top">NTRIP client: Not connected</div>
<div class="a" style="left:358px;top:581px;width:225px;height:16px;border-top:1px solid #a0a0a0;border-left:1px solid #a0a0a0;box-shadow:inset 1px 1px 0 #fff"></div>
<svg class="a" style="left:360px;top:586px" width="16" height="7" viewBox="0 0 16 7"><rect x="0" y="2" width="3" height="1" fill="#000"/><rect x="0" y="4" width="3" height="1" fill="#000"/><path d="M2.5 1.5Q2.5 0 4 0H7V7H4Q2.5 7 2.5 5.5Z" fill="#000"/><rect x="3.6" y="1.3" width="1.8" height="4.4" fill="#d0d0d0"/><path d="M13.5 1.5Q13.5 0 12 0H9V7H12Q13.5 7 13.5 5.5Z" fill="#000"/><rect x="10.6" y="1.3" width="1.8" height="4.4" fill="#d0d0d0"/><rect x="13" y="2" width="3" height="1" fill="#000"/><rect x="13" y="4" width="3" height="1" fill="#000"/></svg>
<div class="t" style="left:380px;top:584px;font-size:12px;transform:scaleX(0.975);transform-origin:left top">MQTT client: Not connected</div>
<div class="a" style="left:602px;top:581px;width:115px;height:16px;border-top:1px solid #a0a0a0;border-left:1px solid #a0a0a0;box-shadow:inset 1px 1px 0 #fff"></div>
<div class="t" style="left:605px;top:584px;font-size:12px;transform:scaleX(0.975);transform-origin:left top">u-blox Generation 9</div>
<div class="a" style="left:720px;top:581px;width:105px;height:16px;border-top:1px solid #a0a0a0;border-left:1px solid #a0a0a0;box-shadow:inset 1px 1px 0 #fff"></div>
<svg class="a" style="left:722px;top:585px" width="16" height="8" viewBox="0 0 17 8"><path d="M0 2.5H4M0 5.5H4M13 2.5H17M13 5.5H17" stroke="#000"/><rect x="4" y="0.5" width="9" height="7" rx="2.5" fill="#30d030" stroke="#000"/><path d="M8.5 0.5V7.5" stroke="#000"/></svg>
<div class="t" style="left:742px;top:584px;font-size:12px;transform:scaleX(0.93);transform-origin:left top">COM1 9600</div>
<div class="a" style="left:828px;top:581px;width:89px;height:16px;border-top:1px solid #a0a0a0;border-left:1px solid #a0a0a0;box-shadow:inset 1px 1px 0 #fff"></div>
<div class="t" style="left:831px;top:584px;font-size:12px;transform:scaleX(0.975);transform-origin:left top">No file open</div>
<svg class="a" style="left:903px;top:582px" width="14" height="14"><path d="M13 3L3 13M13 7L7 13M13 11L11 13" stroke="#a0a0a0"/></svg>
<div class="a" style="left:232px;top:86px;width:456px;height:424px;border-radius:8px;background:#f0f0f0;border:1px solid #d0d0d0;overflow:hidden;box-shadow:0 4px 14px rgba(0,0,0,0.28),0 0 3px rgba(0,0,0,0.15)">
<div class="a" style="left:0;top:0;width:456px;height:24px;background:#f3f3f3"></div>
<div class="t" style="left:7px;top:8px;font-size:12px;color:#000;letter-spacing:-0.15px">NTRIP client settings</div>
<svg class="a" style="left:434px;top:8px" width="11" height="11"><path d="M0.5 0.5L10.5 10.5M10.5 0.5L0.5 10.5" stroke="#1a1a1a" stroke-width="1.1"/></svg>
</div>
<div class="a" style="left:256px;top:133px;width:420px;height:122px;border:1px solid #a8a8a8;box-shadow:1px 1px 0 #fff, inset 1px 1px 0 #fff"></div>
<div class="t" style="left:261px;top:129px;padding:0 2px;background:#f0f0f0;font-size:11px;transform:scaleX(0.975);transform-origin:left top">NTRIP caster settings</div>
<div class="a" style="left:256px;top:267px;width:420px;height:205px;border:1px solid #a8a8a8;box-shadow:1px 1px 0 #fff, inset 1px 1px 0 #fff"></div>
<div class="t" style="left:261px;top:263px;padding:0 2px;background:#f0f0f0;font-size:11px;transform:scaleX(0.975);transform-origin:left top">NTRIP stream</div>
<div class="t" style="left:271px;top:151px;font-size:11px;color:#000">Address:</div>
<div class="sunk" style="left:366px;top:144px;width:294px;height:22px;background:#fff"><i></i></div>
<div class="t" style="left:371px;top:149px;font-size:11px;color:#000">catnet-ip.icgc.cat</div>
<div class="t" style="left:271px;top:177px;font-size:11px;color:#000">Port:</div>
<div class="sunk" style="left:366px;top:171px;width:294px;height:22px;background:#fff"><i></i></div>
<div class="t" style="left:371px;top:175px;font-size:11px;color:#000">2101</div>
<div class="t" style="left:271px;top:202px;font-size:11px;color:#000">Username:</div>
<div class="sunk" style="left:366px;top:197px;width:294px;height:22px;background:#fff"><i></i></div>
<div class="t" style="left:371px;top:202px;font-size:11px;color:#000">Ardusimple0321</div>
<div class="t" style="left:271px;top:230px;font-size:11px;color:#000">Password:</div>
<div class="sunk" style="left:366px;top:223px;width:294px;height:22px;background:#fff"><i></i></div>
<div class="t" style="left:371px;top:227px;font-size:11px;color:#000">*********</div>
<div class="btn" style="left:366px;top:275px;width:105px;height:25px"><i></i></div>
<div class="t" style="left:366px;width:105px;text-align:center;top:283px;font-size:11px">Update source table</div>
<div class="btn" style="left:477px;top:275px;width:24px;height:25px"><i></i></div>
<svg class="a" style="left:481px;top:280px" width="16" height="16"><circle cx="8" cy="8" r="7" fill="#a8a8a8"/><path d="M5 5L11 11M11 5L5 11" stroke="#f0f0f0" stroke-width="2.2"/></svg>
<div class="t" style="left:509px;top:282px;font-size:11px;color:#000">Request Interval (sec)</div>
<div class="sunk" style="left:621px;top:275px;width:39px;height:22px;background:#fff"><i></i></div>
<div class="t" style="left:271px;top:313px;font-size:11px;color:#000;transform:scaleX(0.955);transform-origin:left top">NTRIP mount point:</div>
<div class="sunk" style="left:366px;top:308px;width:185px;height:20px;background:#fff"><i></i></div>
<div class="t" style="left:371px;top:313px;font-size:11px;color:#000;transform:scaleX(0.88);transform-origin:left top">VRS3_GAL</div>
<div class="btn" style="left:532px;top:309px;width:17px;height:18px"><i></i></div>
<svg class="a" style="left:536px;top:315px" width="9" height="6"><path d="M0 0H9L4.5 5Z" fill="#000"/></svg>
<div class="btn" style="left:556px;top:306px;width:104px;height:26px"><i></i></div>
<div class="t" style="left:556px;width:104px;text-align:center;top:314px;font-size:11px">Mount point details</div>
<div class="sunk" style="left:271px;top:341px;width:12px;height:12px"><i></i></div>
<div class="t" style="left:288px;top:343px;font-size:11px;color:#000;transform:scaleX(0.965);transform-origin:left top">Use manual position</div>
<div class="t" style="left:271px;top:368px;font-size:11px;color:#000">Longitude (deg):</div>
<div class="sunk" style="left:366px;top:361px;width:294px;height:22px;background:#f0f0f0"><i></i></div>
<div class="t" style="left:371px;top:365px;font-size:11px;color:#8c8c8c">0</div>
<div class="t" style="left:271px;top:394px;font-size:11px;color:#000">Latitude (deg):</div>
<div class="sunk" style="left:366px;top:387px;width:294px;height:22px;background:#f0f0f0"><i></i></div>
<div class="t" style="left:371px;top:391px;font-size:11px;color:#8c8c8c">0</div>
<div class="t" style="left:271px;top:420px;font-size:11px;color:#000">Altitude (m):</div>
<div class="sunk" style="left:366px;top:413px;width:294px;height:22px;background:#f0f0f0"><i></i></div>
<div class="t" style="left:371px;top:417px;font-size:11px;color:#8c8c8c">0</div>
<div class="t" style="left:271px;top:446px;font-size:11px;color:#000">Geoid sep. (m):</div>
<div class="sunk" style="left:366px;top:439px;width:294px;height:22px;background:#f0f0f0"><i></i></div>
<div class="t" style="left:371px;top:443px;font-size:11px;color:#8c8c8c">0</div>
<div class="btn" style="left:512px;top:478px;width:75px;height:22px"><i></i></div>
<div class="t" style="left:512px;width:75px;text-align:center;top:484px;font-size:11px">OK</div>
<div class="btn" style="left:597px;top:478px;width:75px;height:22px"><i></i></div>
<div class="t" style="left:597px;width:75px;text-align:center;top:484px;font-size:11px">Cancel</div>
</body></html>
